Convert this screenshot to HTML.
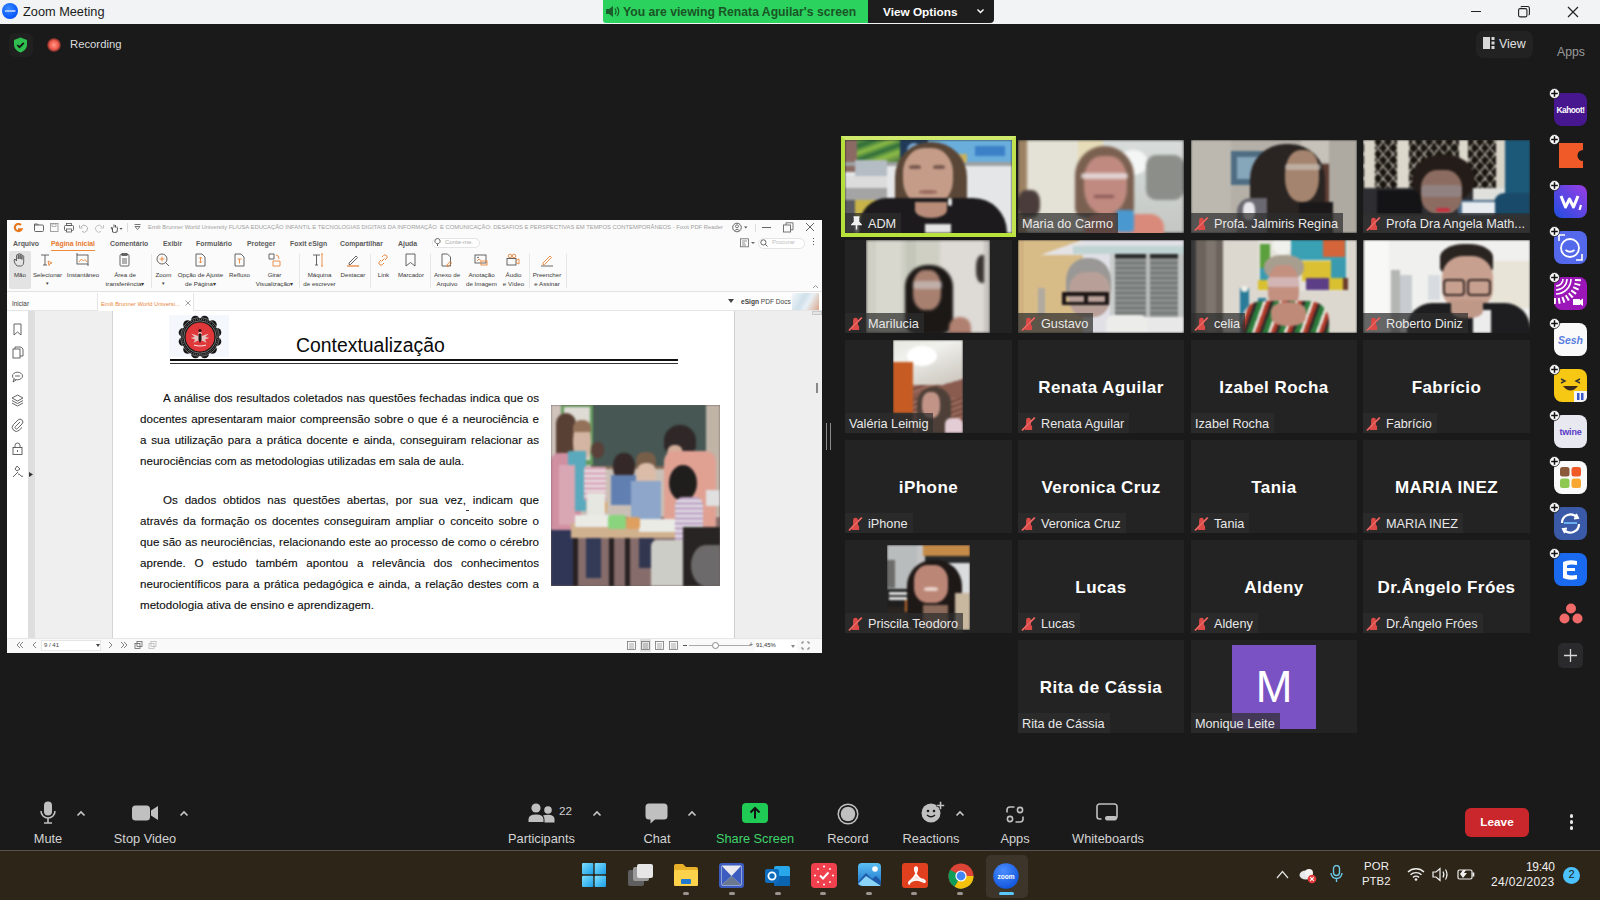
<!DOCTYPE html>
<html><head><meta charset="utf-8">
<style>
*{margin:0;padding:0;box-sizing:border-box}
html,body{width:1600px;height:900px;overflow:hidden;background:#1a1a1a;font-family:"Liberation Sans",sans-serif}
.a{position:absolute}
#title{left:0;top:0;width:1600px;height:24px;background:#f1f3f4}
#main{left:0;top:24px;width:1600px;height:826px;background:#1a1a1a}
#pdf{left:7px;top:220px;width:815px;height:433px;background:#fff;overflow:hidden}
.tile{position:absolute;width:167px;height:93px;background:#232323;overflow:hidden}
.lbl{position:absolute;left:0;bottom:0;height:20px;background:rgba(46,46,46,.72);color:#e8e8e8;font-size:12.7px;line-height:22px;padding:0 5px 0 4px;white-space:nowrap}
.big{position:absolute;left:0;top:38px;width:100%;text-align:center;color:#fff;font-weight:bold;font-size:17px;letter-spacing:0.45px}
#toolbar{left:0;top:780px;width:1600px;height:70px;background:#1a1a1a}
#taskbar{left:0;top:850px;width:1600px;height:50px;background:#2a2117;border-top:1px solid #4a3d2c}
.tb{position:absolute;color:#d0d0d0;font-size:13px;text-align:center}
</style></head><body>

<div id="title" class="a">
 <div class="a" style="left:2px;top:3px;width:16px;height:16px;border-radius:50%;background:radial-gradient(circle at 40% 35%,#3d8bff,#0b5cff 60%,#0a3fd0)"><div class="a" style="left:2px;top:5px;width:12px;font-size:4px;color:#fff;text-align:center;font-weight:bold">zoom</div></div>
 <div class="a" style="left:23px;top:4px;font-size:12.75px;color:#1b1b1b">Zoom Meeting</div>
 <div class="a" style="left:603px;top:0;width:265px;height:23px;background:#2bd35e;border-radius:0 0 0 3px"></div>
 <svg class="a" style="left:605px;top:5px" width="16" height="13" viewBox="0 0 16 13"><path d="M1 4h3l4-3v11l-4-3H1z" fill="#1c5e2b"/><path d="M10 3.5q2 3 0 6M12 2q3.5 4.5 0 9" stroke="#1c5e2b" stroke-width="1.3" fill="none"/></svg>
 <div class="a" style="left:623px;top:5px;font-size:12.2px;font-weight:bold;color:#1a5426">You are viewing Renata Aguilar's screen</div>
 <div class="a" style="left:868px;top:0;width:126px;height:23px;background:#1d1d1d;border-radius:0 0 4px 0"></div>
 <div class="a" style="left:883px;top:5px;font-size:11.8px;font-weight:bold;color:#fff">View Options</div>
 <svg class="a" style="left:976px;top:8px" width="9" height="7" viewBox="0 0 9 7"><path d="M1.5 1.5l3 3 3-3" stroke="#fff" stroke-width="1.4" fill="none"/></svg>
 <div class="a" style="left:1471px;top:11px;width:10px;height:1px;background:#222"></div>
 <svg class="a" style="left:1518px;top:6px" width="12" height="12" viewBox="0 0 12 12"><rect x="0.6" y="2.6" width="8.3" height="8.3" rx="1.5" fill="none" stroke="#222" stroke-width="1.1"/><path d="M3 1.3q0-.8.9-.8h5.6q1.9 0 1.9 1.9v5.6q0 .9-.8.9" fill="none" stroke="#222" stroke-width="1.1"/></svg>
 <svg class="a" style="left:1567px;top:6px" width="12" height="12" viewBox="0 0 12 12"><path d="M1 1l10 10M11 1L1 11" stroke="#222" stroke-width="1.2"/></svg>
</div>
<div id="main" class="a"></div>
<div class="a" style="left:9px;top:33px;width:24px;height:24px;border-radius:6px;background:#202020"></div>
<svg class="a" style="left:13px;top:37px" width="15" height="16" viewBox="0 0 15 16"><path d="M7.5 0.5L14 3v4.5c0 4-3 6.8-6.5 8-3.5-1.2-6.5-4-6.5-8V3z" fill="#2fbf50"/><path d="M4.3 8l2.2 2.2 4.3-4.3" stroke="#111" stroke-width="1.7" fill="none"/></svg>
<div class="a" style="left:47px;top:38px;width:14px;height:14px;border-radius:50%;background:radial-gradient(circle,#ff9a8a 0,#f0584a 45%,rgba(220,60,50,.35) 70%,rgba(0,0,0,0) 100%)"></div>
<div class="a" style="left:70px;top:38px;font-size:11.3px;color:#dcdcdc">Recording</div>
<div class="a" style="left:1476px;top:31px;width:57px;height:27px;border-radius:7px;background:#222"></div>
<svg class="a" style="left:1483px;top:37px" width="12" height="12" viewBox="0 0 12 12"><rect x="0" y="0" width="7" height="12" fill="#d8d8d8"/><rect x="8.5" y="0" width="3" height="3" fill="#d8d8d8"/><rect x="8.5" y="4.5" width="3" height="3" fill="#d8d8d8"/><rect x="8.5" y="9" width="3" height="3" fill="#d8d8d8"/></svg>
<div class="a" style="left:1499px;top:37px;font-size:12.4px;color:#e0e0e0">View</div>
<div class="a" style="left:1557px;top:45px;font-size:12.2px;color:#9a9a9a">Apps</div>

<div class="a" style="left:7px;top:220px;width:815px;height:433px;background:#fff;overflow:hidden"></div>
<div class="a" style="left:7px;top:220px;width:815px;height:16px;background:#fbfbfb"></div>
<div class="a" style="left:7px;top:236px;width:815px;height:56px;background:#fbfbfb;border-bottom:1px solid #e2e2e2"></div>
<svg class="a" style="left:12.5px;top:222.5px" width="10" height="10" viewBox="0 0 10 10"><path d="M8 2A3.6 3.6 0 1 0 8.6 6.2H5" fill="none" stroke="#e8781e" stroke-width="2.1"/></svg>
<svg class="a" style="left:34px;top:223px" width="14" height="10" viewBox="0 0 14 10"><rect x="0.5" y="2" width="9" height="6.5" rx="1" fill="none" stroke="#555" stroke-width="0.9"/><path d="M0.5 3V1h3l1 1" fill="none" stroke="#555" stroke-width="0.9"/></svg>
<svg class="a" style="left:50px;top:223px" width="14" height="10" viewBox="0 0 14 10"><rect x="0.5" y="0.5" width="7.5" height="8" fill="none" stroke="#999" stroke-width="0.9"/><rect x="2" y="1" width="4" height="2.5" fill="none" stroke="#999" stroke-width="0.7"/></svg>
<svg class="a" style="left:64px;top:223px" width="14" height="10" viewBox="0 0 14 10"><rect x="0.5" y="2.5" width="9" height="5" rx="1" fill="none" stroke="#555" stroke-width="0.9"/><rect x="2.5" y="0.5" width="5" height="2" fill="none" stroke="#555" stroke-width="0.8"/><rect x="2.5" y="6" width="5" height="3" fill="#fff" stroke="#555" stroke-width="0.8"/></svg>
<svg class="a" style="left:79px;top:223px" width="14" height="10" viewBox="0 0 14 10"><path d="M2 4a3.5 3.5 0 1 1 1 4.5" fill="none" stroke="#aaa" stroke-width="0.9"/><path d="M0.5 2v3h3" fill="none" stroke="#aaa" stroke-width="0.9"/></svg>
<svg class="a" style="left:94px;top:223px" width="14" height="10" viewBox="0 0 14 10"><path d="M8 4a3.5 3.5 0 1 0-1 4.5" fill="none" stroke="#bbb" stroke-width="0.9"/><path d="M9.5 2v3h-3" fill="none" stroke="#bbb" stroke-width="0.9"/></svg>
<svg class="a" style="left:110px;top:223px" width="14" height="10" viewBox="0 0 14 10"><path d="M2.5 9V4.5M4 4.5V1.5M5.5 4.5V2M7 5V3.5M2.5 7q-2-2-1-3M2.5 9q2 1 4.5 0l.5-4" fill="none" stroke="#444" stroke-width="0.9"/><path d="M9.5 5h3l-1.5 1.8z" fill="#444"/></svg>
<svg class="a" style="left:134px;top:223px" width="14" height="10" viewBox="0 0 14 10"><path d="M0.5 1.5h6M1 3.5l2.5 3 2.5-3z" fill="none" stroke="#666" stroke-width="0.9"/></svg>
<div class="a" style="left:127px;top:223px;width:1px;height:9px;background:#ddd"></div>
<div class="a" style="left:148px;top:223.5px;font-size:5.85px;color:#a0a0a0;white-space:nowrap">Emili Brunner World University FL/USA EDUCAÇÃO INFANTIL E TECNOLOGIAS DIGITAIS DA INFORMAÇÃO&nbsp; E COMUNICAÇÃO: DESAFIOS E PERSPECTIVAS EM TEMPOS CONTEMPORÂNEOS - Foxit PDF Reader</div>
<svg class="a" style="left:732px;top:222px" width="18" height="11" viewBox="0 0 18 11"><circle cx="5" cy="5.5" r="4.3" fill="none" stroke="#555" stroke-width="0.9"/><circle cx="5" cy="4.3" r="1.5" fill="none" stroke="#555" stroke-width="0.8"/><path d="M2.5 8.5q2.5-2.5 5 0" fill="none" stroke="#555" stroke-width="0.8"/><path d="M12 4.5h3.5l-1.75 2z" fill="#555"/></svg>
<div class="a" style="left:755px;top:224px;width:1px;height:8px;background:#ddd"></div>
<div class="a" style="left:762px;top:227px;width:9px;height:1px;background:#666"></div>
<svg class="a" style="left:783px;top:222px" width="11" height="11" viewBox="0 0 11 11"><rect x="0.5" y="3" width="7" height="7" fill="none" stroke="#666" stroke-width="0.9"/><path d="M3 3V0.8h7v7H7.5" fill="none" stroke="#666" stroke-width="0.9"/></svg>
<svg class="a" style="left:805px;top:222px" width="10" height="10" viewBox="0 0 10 10"><path d="M1 1l8 8M9 1L1 9" stroke="#555" stroke-width="0.9"/></svg>
<div class="a" style="left:13px;top:239.5px;font-size:6.9px;font-weight:bold;color:#5a5a5a;white-space:nowrap">Arquivo</div>
<div class="a" style="left:51px;top:239.5px;font-size:6.9px;font-weight:bold;color:#e8792f;white-space:nowrap">Página Inicial</div>
<div class="a" style="left:110px;top:239.5px;font-size:6.9px;font-weight:bold;color:#5a5a5a;white-space:nowrap">Comentário</div>
<div class="a" style="left:163px;top:239.5px;font-size:6.9px;font-weight:bold;color:#5a5a5a;white-space:nowrap">Exibir</div>
<div class="a" style="left:196px;top:239.5px;font-size:6.9px;font-weight:bold;color:#5a5a5a;white-space:nowrap">Formulário</div>
<div class="a" style="left:247px;top:239.5px;font-size:6.9px;font-weight:bold;color:#5a5a5a;white-space:nowrap">Proteger</div>
<div class="a" style="left:290px;top:239.5px;font-size:6.9px;font-weight:bold;color:#5a5a5a;white-space:nowrap">Foxit eSign</div>
<div class="a" style="left:340px;top:239.5px;font-size:6.9px;font-weight:bold;color:#5a5a5a;white-space:nowrap">Compartilhar</div>
<div class="a" style="left:398px;top:239.5px;font-size:6.9px;font-weight:bold;color:#5a5a5a;white-space:nowrap">Ajuda</div>
<div class="a" style="left:51px;top:249.5px;width:44px;height:1.3px;background:#f08a3c"></div>
<div class="a" style="left:432px;top:237.5px;width:48px;height:10px;border:1px solid #e4e4e4;border-radius:5px;background:#fff"></div>
<svg class="a" style="left:434px;top:238px" width="7" height="9" viewBox="0 0 7 9"><path d="M3.5 8V5.8M3.5 5.8a2.6 2.6 0 1 1 .01 0" fill="none" stroke="#555" stroke-width="0.9"/></svg>
<div class="a" style="left:445px;top:238.5px;font-size:6px;color:#aaa">Conte-me.</div>
<svg class="a" style="left:740px;top:238px" width="16" height="10" viewBox="0 0 16 10"><rect x="0.5" y="0.8" width="8" height="8" fill="none" stroke="#666" stroke-width="0.8"/><path d="M2 3h5M2 5h3M2 7h4" stroke="#666" stroke-width="0.7"/><path d="M11 4h4l-2 2z" fill="#666"/></svg>
<div class="a" style="left:758px;top:237.5px;width:47px;height:11px;border:1px solid #e4e4e4;border-radius:6px;background:#fff"></div>
<svg class="a" style="left:760px;top:239px" width="8" height="8" viewBox="0 0 8 8"><circle cx="3.4" cy="3.4" r="2.6" fill="none" stroke="#555" stroke-width="0.9"/><path d="M5.3 5.3L7.5 7.5" stroke="#555" stroke-width="0.9"/></svg>
<div class="a" style="left:772px;top:239px;font-size:6px;color:#bbb">Procurar</div>
<div class="a" style="left:813px;top:238px;width:1.4px;height:1.4px;background:#555;box-shadow:0 3px 0 #555,0 6px 0 #555"></div>
<div class="a" style="left:9px;top:251px;width:22px;height:38px;background:#e3e3e3;border-radius:2px"></div>
<svg class="a" style="left:13px;top:253px" width="14" height="14" viewBox="0 0 14 14"><path d="M4 13q-3-3-3-6l1-1 1.5 2V2.5a.9.9 0 0 1 1.8 0V6V1.5a.9.9 0 0 1 1.8 0V6V2a.9.9 0 0 1 1.8 0V6.5V3.5a.9.9 0 0 1 1.8 0V9q0 3-2 4z" stroke="#555" stroke-width="0.9" fill="none"/></svg>
<svg class="a" style="left:40px;top:253px" width="14" height="14" viewBox="0 0 14 14"><path d="M1 2h8M5 2v10M3 12h4" stroke="#555" stroke-width="0.9" fill="none"/><path d="M8 8l4 2-2 .5-1 2z" stroke="#e8853a" stroke-width="0.9" fill="none"/></svg>
<svg class="a" style="left:76px;top:253px" width="14" height="14" viewBox="0 0 14 14"><rect x="1" y="2" width="11" height="9" stroke="#555" stroke-width="0.9" fill="none"/><path d="M3 9l2.5-3 2 2 1.5-1.5L11 9" stroke="#e8853a" stroke-width="0.9" fill="none"/><path d="M1 0v2M12 11v2" stroke="#555" stroke-width="0.9" fill="none"/></svg>
<svg class="a" style="left:118px;top:253px" width="14" height="14" viewBox="0 0 14 14"><rect x="2" y="1.5" width="9" height="11.5" rx="1" stroke="#555" stroke-width="0.9" fill="none"/><rect x="4" y="0.5" width="5" height="2" stroke="#555" stroke-width="0.9" fill="none"/><path d="M4 6h5M4 8h5M4 10h5" stroke="#555" stroke-width="0.9" fill="none"/></svg>
<svg class="a" style="left:156px;top:253px" width="14" height="14" viewBox="0 0 14 14"><circle cx="6" cy="6" r="5" stroke="#555" stroke-width="0.9" fill="none"/><path d="M9.6 9.6L13 13" stroke="#555" stroke-width="0.9" fill="none"/><path d="M6 3.5v5M3.5 6h5" stroke="#e8853a" stroke-width="0.9" fill="none"/></svg>
<svg class="a" style="left:194px;top:253px" width="14" height="14" viewBox="0 0 14 14"><path d="M2 1h6l3 3v9H2z" stroke="#555" stroke-width="0.9" fill="none"/><path d="M6.5 4v6M5 5.5l1.5-1.5 1.5 1.5M5 8.5l1.5 1.5 1.5-1.5" stroke="#e8853a" stroke-width="0.9" fill="none"/></svg>
<svg class="a" style="left:233px;top:253px" width="14" height="14" viewBox="0 0 14 14"><path d="M2 1h6l3 3v9H2z" stroke="#555" stroke-width="0.9" fill="none"/><path d="M4.5 6h4M6.5 6v4.5" stroke="#e8853a" stroke-width="0.9" fill="none"/></svg>
<svg class="a" style="left:268px;top:253px" width="14" height="14" viewBox="0 0 14 14"><path d="M1 1h5v5H1z" stroke="#555" stroke-width="0.9" fill="none"/><path d="M5 8h7v5H5zM8 2q3 0 3 4" stroke="#e8853a" stroke-width="0.9" fill="none"/></svg>
<svg class="a" style="left:312px;top:253px" width="14" height="14" viewBox="0 0 14 14"><path d="M1 2h7M4.5 2v10M3 12h3" stroke="#555" stroke-width="0.9" fill="none"/><path d="M10 1v12M9 1h2M9 13h2" stroke="#e8853a" stroke-width="0.9" fill="none"/></svg>
<svg class="a" style="left:346px;top:253px" width="14" height="14" viewBox="0 0 14 14"><path d="M3 10l7-7 1.5 1.5-7 7H3z" stroke="#555" stroke-width="0.9" fill="none"/><path d="M1 13h12" stroke="#e8853a" stroke-width="1.3"/></svg>
<svg class="a" style="left:376px;top:253px" width="14" height="14" viewBox="0 0 14 14"><path d="M5.5 8.5l3-3M6 4l1.5-1.5a2 2 0 0 1 3 3L9 7M8 10l-1.5 1.5a2 2 0 0 1-3-3L5 7" stroke="#e8853a" stroke-width="1" fill="none"/></svg>
<svg class="a" style="left:404px;top:253px" width="14" height="14" viewBox="0 0 14 14"><path d="M2 1h9v12l-4.5-3.5L2 13z" stroke="#555" stroke-width="0.9" fill="none"/></svg>
<svg class="a" style="left:440px;top:253px" width="14" height="14" viewBox="0 0 14 14"><path d="M2 1h5.5l3 3v9H2z" stroke="#555" stroke-width="0.9" fill="none"/><path d="M7 12l3-3.5 1.5 1.5-3 3.5H7z" stroke="#e8853a" stroke-width="0.9" fill="none"/></svg>
<svg class="a" style="left:474px;top:253px" width="14" height="14" viewBox="0 0 14 14"><rect x="1" y="2" width="11" height="8" stroke="#555" stroke-width="0.9" fill="none"/><path d="M3 8l2-2 2 1.5" stroke="#e8853a" stroke-width="0.9" fill="none"/><circle cx="4" cy="4.5" r=".8" fill="#555"/><rect x="7" y="8" width="6" height="4" stroke="#e8853a" stroke-width="0.9" fill="none"/></svg>
<svg class="a" style="left:506px;top:253px" width="14" height="14" viewBox="0 0 14 14"><circle cx="4" cy="3" r="1.8" stroke="#e8853a" stroke-width="0.9" fill="none"/><circle cx="8" cy="3" r="1.8" stroke="#e8853a" stroke-width="0.9" fill="none"/><rect x="1" y="5.5" width="9" height="6.5" stroke="#555" stroke-width="0.9" fill="none"/><path d="M10 7.5l3-1.5v5l-3-1.5" stroke="#e8853a" stroke-width="0.9" fill="none"/></svg>
<svg class="a" style="left:540px;top:253px" width="14" height="14" viewBox="0 0 14 14"><path d="M3 10l7-7 1.5 1.5-7 7H3z" stroke="#e8853a" stroke-width="0.9" fill="none"/><path d="M1 13h12" stroke="#555" stroke-width="0.9" fill="none"/></svg>
<div class="a" style="left:151px;top:254px;width:1px;height:34px;background:#e6e6e6"></div>
<div class="a" style="left:299px;top:254px;width:1px;height:34px;background:#e6e6e6"></div>
<div class="a" style="left:370px;top:254px;width:1px;height:34px;background:#e6e6e6"></div>
<div class="a" style="left:430px;top:254px;width:1px;height:34px;background:#e6e6e6"></div>
<div class="a" style="left:529px;top:254px;width:1px;height:34px;background:#e6e6e6"></div>
<div class="a" style="left:566px;top:254px;width:1px;height:34px;background:#e6e6e6"></div>
<div class="a" style="left:-20px;width:80px;text-align:center;top:271.0px;font-size:6.2px;color:#383838;white-space:nowrap">Mão</div>
<div class="a" style="left:7.5px;width:80px;text-align:center;top:271.0px;font-size:6.2px;color:#383838;white-space:nowrap">Selecionar</div>
<div class="a" style="left:7.5px;width:80px;text-align:center;top:280.3px;font-size:5px;color:#383838;white-space:nowrap">▾</div>
<div class="a" style="left:43px;width:80px;text-align:center;top:271.0px;font-size:6.2px;color:#383838;white-space:nowrap">Instantâneo</div>
<div class="a" style="left:85px;width:80px;text-align:center;top:271.0px;font-size:6.2px;color:#383838;white-space:nowrap">Área de</div>
<div class="a" style="left:85px;width:80px;text-align:center;top:280.3px;font-size:6.2px;color:#383838;white-space:nowrap">transferência▾</div>
<div class="a" style="left:123.5px;width:80px;text-align:center;top:271.0px;font-size:6.2px;color:#383838;white-space:nowrap">Zoom</div>
<div class="a" style="left:123.5px;width:80px;text-align:center;top:280.3px;font-size:5px;color:#383838;white-space:nowrap">▾</div>
<div class="a" style="left:160.5px;width:80px;text-align:center;top:271.0px;font-size:6.2px;color:#383838;white-space:nowrap">Opção de Ajuste</div>
<div class="a" style="left:160.5px;width:80px;text-align:center;top:280.3px;font-size:6.2px;color:#383838;white-space:nowrap">de Página▾</div>
<div class="a" style="left:199.5px;width:80px;text-align:center;top:271.0px;font-size:6.2px;color:#383838;white-space:nowrap">Refluxo</div>
<div class="a" style="left:234.5px;width:80px;text-align:center;top:271.0px;font-size:6.2px;color:#383838;white-space:nowrap">Girar</div>
<div class="a" style="left:234.5px;width:80px;text-align:center;top:280.3px;font-size:6.2px;color:#383838;white-space:nowrap">Visualização▾</div>
<div class="a" style="left:279.5px;width:80px;text-align:center;top:271.0px;font-size:6.2px;color:#383838;white-space:nowrap">Máquina</div>
<div class="a" style="left:279.5px;width:80px;text-align:center;top:280.3px;font-size:6.2px;color:#383838;white-space:nowrap">de escrever</div>
<div class="a" style="left:313px;width:80px;text-align:center;top:271.0px;font-size:6.2px;color:#383838;white-space:nowrap">Destacar</div>
<div class="a" style="left:343.5px;width:80px;text-align:center;top:271.0px;font-size:6.2px;color:#383838;white-space:nowrap">Link</div>
<div class="a" style="left:371px;width:80px;text-align:center;top:271.0px;font-size:6.2px;color:#383838;white-space:nowrap">Marcador</div>
<div class="a" style="left:407px;width:80px;text-align:center;top:271.0px;font-size:6.2px;color:#383838;white-space:nowrap">Anexo de</div>
<div class="a" style="left:407px;width:80px;text-align:center;top:280.3px;font-size:6.2px;color:#383838;white-space:nowrap">Arquivo</div>
<div class="a" style="left:441.5px;width:80px;text-align:center;top:271.0px;font-size:6.2px;color:#383838;white-space:nowrap">Anotação</div>
<div class="a" style="left:441.5px;width:80px;text-align:center;top:280.3px;font-size:6.2px;color:#383838;white-space:nowrap">de Imagem</div>
<div class="a" style="left:473.5px;width:80px;text-align:center;top:271.0px;font-size:6.2px;color:#383838;white-space:nowrap">Áudio</div>
<div class="a" style="left:473.5px;width:80px;text-align:center;top:280.3px;font-size:6.2px;color:#383838;white-space:nowrap">e Vídeo</div>
<div class="a" style="left:507px;width:80px;text-align:center;top:271.0px;font-size:6.2px;color:#383838;white-space:nowrap">Preencher</div>
<div class="a" style="left:507px;width:80px;text-align:center;top:280.3px;font-size:6.2px;color:#383838;white-space:nowrap">e Assinar</div>
<svg class="a" style="left:812px;top:284px" width="7" height="5" viewBox="0 0 7 5"><path d="M1 4l2.5-2.5L6 4" stroke="#888" stroke-width="0.8" fill="none"/></svg>
<div class="a" style="left:7px;top:292px;width:815px;height:19px;background:#fdfdfd;border-bottom:1px solid #e5e5e5"></div>
<div class="a" style="left:12px;top:300px;font-size:6.4px;color:#3a3a3a">Iniciar</div>
<div class="a" style="left:97px;top:293px;width:97px;height:18px;background:#fff;border-left:1px solid #e5e5e5;border-right:1px solid #e5e5e5"></div>
<div class="a" style="left:101px;top:300.5px;font-size:5.8px;color:#e8853a;white-space:nowrap">Emili Brunner World Universi...</div>
<svg class="a" style="left:185px;top:300px" width="6" height="6" viewBox="0 0 6 6"><path d="M.5 .5l5 5M5.5 .5l-5 5" stroke="#777" stroke-width="0.7"/></svg>
<svg class="a" style="left:728px;top:299px" width="6" height="4" viewBox="0 0 6 4"><path d="M0 0h6L3 4z" fill="#444"/></svg>
<div class="a" style="left:741px;top:298px;font-size:6.6px;color:#444;white-space:nowrap"><b>eSign</b> PDF Docs</div>
<div class="a" style="left:792px;top:293px;width:27px;height:17px;background:linear-gradient(120deg,#f4f8fb 0,#cfe0ea 40%,#e8f0f5 60%,#d9a58a 100%)"></div>
<div class="a" style="left:28px;top:311px;width:7px;height:327px;background:#dedede"></div>
<div class="a" style="left:35px;top:311px;width:78px;height:327px;background:#efefef;border-right:1px solid #d4d4d4"></div>
<div class="a" style="left:734px;top:311px;width:88px;height:327px;background:#eeeeee;border-left:1px solid #cfcfcf"></div>
<div class="a" style="left:812px;top:310.5px;width:10px;height:4.5px;background:#e4e4e4;border:1px solid #c8c8c8"></div>
<div class="a" style="left:816px;top:383px;width:2px;height:10px;background:#888"></div>
<svg class="a" style="left:11px;top:323px" width="14" height="14" viewBox="0 0 14 14"><path d="M3 1h7v11l-3.5-3L3 12z" stroke="#555" stroke-width="0.9" fill="none"/></svg>
<svg class="a" style="left:11px;top:346px" width="14" height="14" viewBox="0 0 14 14"><rect x="2" y="3" width="7" height="9" stroke="#555" stroke-width="0.9" fill="none"/><path d="M4 3V1h6l2 2v7h-3" stroke="#555" stroke-width="0.9" fill="none"/></svg>
<svg class="a" style="left:11px;top:370px" width="14" height="14" viewBox="0 0 14 14"><ellipse cx="6.5" cy="6" rx="5" ry="3.8" stroke="#555" stroke-width="0.9" fill="none"/><path d="M3 9l-1 3 3-2" stroke="#555" stroke-width="0.9" fill="none"/><path d="M4 6h5" stroke="#555" stroke-width="0.9" fill="none"/></svg>
<svg class="a" style="left:11px;top:394px" width="14" height="14" viewBox="0 0 14 14"><path d="M6.5 1L12 4l-5.5 3L1 4z" stroke="#555" stroke-width="0.9" fill="none"/><path d="M1 6.5l5.5 3 5.5-3M1 9l5.5 3 5.5-3" stroke="#555" stroke-width="0.9" fill="none"/></svg>
<svg class="a" style="left:11px;top:418px" width="14" height="14" viewBox="0 0 14 14"><path d="M9 4L4.5 8.5a1.4 1.4 0 0 0 2 2L11 6a2.8 2.8 0 0 0-4-4L2.5 6.5a4 4 0 0 0 5.7 5.7L11 9.5" stroke="#555" stroke-width="0.9" fill="none"/></svg>
<svg class="a" style="left:11px;top:442px" width="14" height="14" viewBox="0 0 14 14"><rect x="2" y="5.5" width="9" height="7" stroke="#555" stroke-width="0.9" fill="none"/><path d="M4 5.5V3.5a2.5 2.5 0 0 1 5 0v2" stroke="#555" stroke-width="0.9" fill="none"/><path d="M6.5 8v2" stroke="#555" stroke-width="0.9" fill="none"/></svg>
<svg class="a" style="left:11px;top:465px" width="14" height="14" viewBox="0 0 14 14"><path d="M2 12l5-5M4 4l2-3 3 3-3 2zM7 9q2 0 3 2 1 1 2 0" stroke="#555" stroke-width="0.9" fill="none"/></svg>
<svg class="a" style="left:29px;top:472px" width="4" height="5" viewBox="0 0 4 5"><path d="M0 0l4 2.5L0 5z" fill="#333"/></svg>
<div class="a" style="left:169px;top:315px;width:60px;height:42px;background:#f4f7fb"></div>
<svg class="a" style="left:176.5px;top:314px" width="46" height="46" viewBox="0 0 46 46">
<g fill="#151515"><circle cx="39.91" cy="27.50" r="4.4"/><circle cx="35.40" cy="35.35" r="4.4"/><circle cx="27.56" cy="39.90" r="4.4"/><circle cx="18.50" cy="39.91" r="4.4"/><circle cx="10.65" cy="35.40" r="4.4"/><circle cx="6.10" cy="27.56" r="4.4"/><circle cx="6.09" cy="18.50" r="4.4"/><circle cx="10.60" cy="10.65" r="4.4"/><circle cx="18.44" cy="6.10" r="4.4"/><circle cx="27.50" cy="6.09" r="4.4"/><circle cx="35.35" cy="10.60" r="4.4"/><circle cx="39.90" cy="18.44" r="4.4"/></g><circle cx="23" cy="23" r="19" fill="#151515"/>
<circle cx="23" cy="23" r="19.3" fill="none" stroke="#d8d8d8" stroke-width="0.45"/>
<circle cx="23" cy="23" r="16.2" fill="none" stroke="#cfcfcf" stroke-width="0.5"/>
<circle cx="23" cy="23" r="17.7" fill="none" stroke="#aaa" stroke-width="0.9" stroke-dasharray="0.8 1.2"/>
<circle cx="23" cy="23" r="14.4" fill="#e0383a"/>
<path d="M23 17l-1.8 2v3l-7-2.5 3.5 3.5-4 .8 4.5 2-2 3 6.8-3 6.8 3-2-3 4.5-2-4-.8 3.5-3.5-7 2.5v-3z" fill="#e8d0d0" opacity="0.9"/>
<path d="M23 19l-1.5 1.5v5l1.5 3.5 1.5-3.5v-5z" fill="#201818"/>
<circle cx="23" cy="16.5" r="1.6" fill="#301010"/>
<path d="M17 31q6 2 12 0" stroke="#f4e4e4" stroke-width="1.1" fill="none"/>
</svg>
<div class="a" style="left:296px;top:333.5px;font-size:19.4px;color:#0a0a0a;white-space:nowrap">Contextualização</div>
<div class="a" style="left:170px;top:359px;width:508px;height:2.3px;background:#111"></div>
<div class="a" style="left:170px;top:363.3px;width:508px;height:1px;background:#333"></div>
<div class="a" style="left:163px;top:390.6px;font-size:11.6px;color:#0e0e0e;white-space:nowrap;line-height:14px;-webkit-text-stroke:0.12px #0e0e0e;width:376px;text-align:justify;text-align-last:justify;white-space:normal;height:14px;overflow:hidden">A análise dos resultados coletados nas questões fechadas indica que os</div>
<div class="a" style="left:140px;top:411.6px;font-size:11.6px;color:#0e0e0e;white-space:nowrap;line-height:14px;-webkit-text-stroke:0.12px #0e0e0e;width:399px;text-align:justify;text-align-last:justify;white-space:normal;height:14px;overflow:hidden">docentes apresentaram maior compreensão sobre o que é a neurociência e</div>
<div class="a" style="left:140px;top:432.6px;font-size:11.6px;color:#0e0e0e;white-space:nowrap;line-height:14px;-webkit-text-stroke:0.12px #0e0e0e;width:399px;text-align:justify;text-align-last:justify;white-space:normal;height:14px;overflow:hidden">a sua utilização para a prática docente e ainda, conseguiram relacionar as</div>
<div class="a" style="left:140px;top:453.6px;font-size:11.6px;color:#0e0e0e;white-space:nowrap;line-height:14px;-webkit-text-stroke:0.12px #0e0e0e">neurociências com as metodologias utilizadas em sala de aula.</div>
<div class="a" style="left:163px;top:492.6px;font-size:11.6px;color:#0e0e0e;white-space:nowrap;line-height:14px;-webkit-text-stroke:0.12px #0e0e0e;width:376px;text-align:justify;text-align-last:justify;white-space:normal;height:14px;overflow:hidden">Os dados obtidos nas questões abertas, por sua vez, indicam que</div>
<div class="a" style="left:140px;top:513.6px;font-size:11.6px;color:#0e0e0e;white-space:nowrap;line-height:14px;-webkit-text-stroke:0.12px #0e0e0e;width:399px;text-align:justify;text-align-last:justify;white-space:normal;height:14px;overflow:hidden">através da formação os docentes conseguiram ampliar o conceito sobre o</div>
<div class="a" style="left:140px;top:534.6px;font-size:11.6px;color:#0e0e0e;white-space:nowrap;line-height:14px;-webkit-text-stroke:0.12px #0e0e0e;width:399px;text-align:justify;text-align-last:justify;white-space:normal;height:14px;overflow:hidden">que são as neurociências, relacionando este ao processo de como o cérebro</div>
<div class="a" style="left:140px;top:555.6px;font-size:11.6px;color:#0e0e0e;white-space:nowrap;line-height:14px;-webkit-text-stroke:0.12px #0e0e0e;width:399px;text-align:justify;text-align-last:justify;white-space:normal;height:14px;overflow:hidden">aprende. O estudo também apontou a relevância dos conhecimentos</div>
<div class="a" style="left:140px;top:576.6px;font-size:11.6px;color:#0e0e0e;white-space:nowrap;line-height:14px;-webkit-text-stroke:0.12px #0e0e0e;width:399px;text-align:justify;text-align-last:justify;white-space:normal;height:14px;overflow:hidden">neurocientíficos para a prática pedagógica e ainda, a relação destes com a</div>
<div class="a" style="left:140px;top:597.6px;font-size:11.6px;color:#0e0e0e;white-space:nowrap;line-height:14px;-webkit-text-stroke:0.12px #0e0e0e">metodologia ativa de ensino e aprendizagem.</div>
<div class="a" style="left:465.5px;top:509.5px;width:3px;height:1px;background:#333"></div>
<div class="a" style="left:551px;top:405px;width:169px;height:181px;overflow:hidden;background:#6a5a58"><div class="a" style="left:0;top:0;width:169px;height:181px;filter:blur(1.2px) saturate(0.85) contrast(0.92)"><div class="a" style="left:0px;top:0px;width:169px;height:181px;background:#8a7070;"></div><div class="a" style="left:0px;top:0px;width:169px;height:112px;background:#d2c4b8;"></div><div class="a" style="left:40px;top:0px;width:115px;height:63px;background:#3e5450;"></div><div class="a" style="left:40px;top:61px;width:115px;height:3px;background:#8a6a50;"></div><div class="a" style="left:10px;top:0px;width:32px;height:60px;background:#5aa050;"></div><div class="a" style="left:13px;top:2px;width:26px;height:53px;background:#e8e4dc;"></div><div class="a" style="left:0px;top:0px;width:10px;height:110px;background:#d8c8c0;"></div><div class="a" style="left:155px;top:0px;width:14px;height:110px;background:#c8b8a8;"></div><div class="a" style="left:0px;top:112px;width:169px;height:69px;background:#8a6a68;"></div><div class="a" style="left:5px;top:8px;width:20px;height:45px;background:#5a3a2a;border-radius:10px 10px 2px 2px"></div><div class="a" style="left:0px;top:48px;width:30px;height:78px;background:#e28ea6;border-radius:8px 8px 0 0"></div><div class="a" style="left:0px;top:125px;width:26px;height:56px;background:#283058;"></div><div class="a" style="left:22px;top:18px;width:18px;height:38px;background:#e0b8a0;border-radius:45%"></div><div class="a" style="left:22px;top:15px;width:18px;height:12px;background:#9a7050;border-radius:8px 8px 0 0"></div><div class="a" style="left:17px;top:46px;width:18px;height:60px;background:#4ab0c8;"></div><div class="a" style="left:8px;top:60px;width:16px;height:60px;background:#e8a8b8;"></div><div class="a" style="left:40px;top:37px;width:13px;height:16px;background:#5a3a30;border-radius:45%"></div><div class="a" style="left:33px;top:62px;width:22px;height:33px;background:repeating-linear-gradient(180deg,#e8a8c0 0,#e8a8c0 3px,#f4f0f0 3px,#f4f0f0 5px);"></div><div class="a" style="left:62px;top:48px;width:22px;height:28px;background:#302020;border-radius:45%"></div><div class="a" style="left:60px;top:70px;width:25px;height:30px;background:#5a80c0;"></div><div class="a" style="left:85px;top:47px;width:20px;height:16px;background:#7a5a40;border-radius:8px 8px 2px 2px"></div><div class="a" style="left:86px;top:58px;width:19px;height:22px;background:#e8c0a8;border-radius:40%"></div><div class="a" style="left:80px;top:76px;width:30px;height:40px;background:#8aaad8;"></div><div class="a" style="left:113px;top:20px;width:32px;height:30px;background:#2a2020;border-radius:50% 50% 30% 30%"></div><div class="a" style="left:116px;top:40px;width:16px;height:22px;background:#e0b098;border-radius:40%"></div><div class="a" style="left:113px;top:46px;width:52px;height:80px;background:#f2a290;border-radius:10px 10px 0 0"></div><div class="a" style="left:155px;top:85px;width:14px;height:16px;background:#e8e8e8;"></div><div class="a" style="left:36px;top:96px;width:20px;height:12px;background:#f0a858;border-radius:3px"></div><div class="a" style="left:36px;top:88px;width:18px;height:22px;background:#f0f0ea;"></div><div class="a" style="left:20px;top:118px;width:112px;height:15px;background:#dcb488;"></div><div class="a" style="left:24px;top:110px;width:36px;height:12px;background:#f4f4ee;"></div><div class="a" style="left:88px;top:114px;width:38px;height:13px;background:#f4f4ee;"></div><div class="a" style="left:57px;top:110px;width:18px;height:14px;background:#80e070;border-radius:3px"></div><div class="a" style="left:75px;top:112px;width:14px;height:12px;background:#f0a050;border-radius:3px"></div><div class="a" style="left:22px;top:133px;width:5px;height:48px;background:#201818;"></div><div class="a" style="left:58px;top:133px;width:5px;height:48px;background:#201818;"></div><div class="a" style="left:74px;top:133px;width:5px;height:48px;background:#201818;"></div><div class="a" style="left:126px;top:133px;width:5px;height:48px;background:#201818;"></div><div class="a" style="left:35px;top:133px;width:15px;height:40px;background:#2a3458;"></div><div class="a" style="left:88px;top:133px;width:15px;height:30px;background:#2a3050;"></div><div class="a" style="left:118px;top:60px;width:28px;height:36px;background:#181414;border-radius:50%"></div><div class="a" style="left:124px;top:92px;width:28px;height:52px;background:repeating-linear-gradient(180deg,#c8a8d0 0,#c8a8d0 3px,#f0eef4 3px,#f0eef4 5px);border-radius:8px 8px 0 0"></div><div class="a" style="left:100px;top:135px;width:38px;height:46px;background:#d4d4cc;border-radius:6px 0 0 0"></div><div class="a" style="left:132px;top:122px;width:37px;height:59px;background:#221c1c;"></div><div class="a" style="left:140px;top:140px;width:29px;height:41px;background:rgba(180,180,180,.5);border-radius:50% 0 0 50%"></div></div></div>
<div class="a" style="left:7px;top:638px;width:815px;height:15px;background:#f9f9f9;border-top:1px solid #e6e6e6"></div>
<svg class="a" style="left:16px;top:641px" width="9" height="9" viewBox="0 0 9 9"><path d="M4 1L1 4l3 3M7 1L4 4l3 3" stroke="#666" stroke-width="0.8" fill="none"/></svg>
<svg class="a" style="left:31px;top:641px" width="9" height="9" viewBox="0 0 9 9"><path d="M5 1L2 4l3 3" stroke="#666" stroke-width="0.8" fill="none"/></svg>
<svg class="a" style="left:107px;top:641px" width="9" height="9" viewBox="0 0 9 9"><path d="M2 1l3 3-3 3" stroke="#666" stroke-width="0.8" fill="none"/></svg>
<svg class="a" style="left:120px;top:641px" width="9" height="9" viewBox="0 0 9 9"><path d="M1 1l3 3-3 3M4 1l3 3-3 3" stroke="#666" stroke-width="0.8" fill="none"/></svg>
<svg class="a" style="left:134px;top:641px" width="9" height="9" viewBox="0 0 9 9"><rect x="1" y="2.5" width="5" height="5" stroke="#666" stroke-width="0.8" fill="none"/><rect x="3" y=".5" width="5" height="5" stroke="#666" stroke-width="0.8" fill="none"/></svg>
<svg class="a" style="left:148px;top:641px" width="9" height="9" viewBox="0 0 9 9"><rect x="1" y="2.5" width="5" height="5" stroke="#bbb" stroke-width="0.8" fill="none"/><rect x="3" y=".5" width="5" height="5" stroke="#bbb" stroke-width="0.8" fill="none"/></svg>
<div class="a" style="left:41px;top:640px;width:60px;height:11px;border:1px solid #e6e6e6;background:#fff"></div>
<div class="a" style="left:44px;top:642px;font-size:6px;color:#444">9 / 41</div>
<svg class="a" style="left:96px;top:644px" width="4" height="3" viewBox="0 0 4 3"><path d="M0 0h4L2 3z" fill="#444"/></svg>
<svg class="a" style="left:627px;top:641px" width="9" height="9" viewBox="0 0 9 9"><rect x=".5" y=".5" width="8" height="8" stroke="#777" stroke-width="0.8" fill="none"/><path d="M2 3h5M2 5h5M2 7h5" stroke="#777" stroke-width="0.6"/></svg>
<div class="a" style="left:640px;top:639px;width:11px;height:13px;background:#e2e2e2"></div>
<svg class="a" style="left:641px;top:641px" width="9" height="9" viewBox="0 0 9 9"><rect x=".5" y=".5" width="8" height="8" stroke="#777" stroke-width="0.8" fill="none"/><path d="M2 3h5M2 5h5M2 7h5" stroke="#777" stroke-width="0.6"/></svg>
<svg class="a" style="left:655px;top:641px" width="9" height="9" viewBox="0 0 9 9"><rect x=".5" y=".5" width="8" height="8" stroke="#777" stroke-width="0.8" fill="none"/><path d="M2 3h5M2 5h5M2 7h5" stroke="#777" stroke-width="0.6"/></svg>
<svg class="a" style="left:669px;top:641px" width="9" height="9" viewBox="0 0 9 9"><rect x=".5" y=".5" width="8" height="8" stroke="#777" stroke-width="0.8" fill="none"/><path d="M2 3h5M2 5h5M2 7h5" stroke="#777" stroke-width="0.6"/></svg>
<div class="a" style="left:683px;top:645px;width:4px;height:1px;background:#555"></div>
<div class="a" style="left:689px;top:645px;width:62px;height:1px;background:#aaa"></div>
<div class="a" style="left:712px;top:642px;width:7px;height:7px;border-radius:50%;border:1px solid #888;background:#fff"></div>
<div class="a" style="left:749px;top:641px;font-size:7px;color:#555">+</div>
<div class="a" style="left:755px;top:640px;width:42px;height:11px;background:#fff"></div>
<div class="a" style="left:756px;top:642px;font-size:5.8px;color:#333">91,45%</div>
<svg class="a" style="left:791px;top:645px" width="4" height="3" viewBox="0 0 4 3"><path d="M0 0h4L2 3z" fill="#888"/></svg>
<svg class="a" style="left:801px;top:641px" width="9" height="9" viewBox="0 0 9 9"><path d="M1 3V1h2M6 1h2v2M8 6v2H6M3 8H1V6" stroke="#666" stroke-width="0.8" fill="none"/></svg>
<div class="a" style="left:841px;top:136px;width:175px;height:101px;border:4px solid #c4e85a;border-color:#cfe96b #c0e24e #b9e23c #b8e03a"></div>
<div class="tile" style="left:845px;top:140px;width:167px"><div class="a" style="left:0px;top:0px;width:167px;height:93px;overflow:hidden"><div class="a" style="left:0;top:0;width:167px;height:93px;filter:blur(1.3px)"><div class="a" style="left:0px;top:0px;width:167px;height:93px;background:#e4e6e8;"></div><div class="a" style="left:0px;top:0px;width:167px;height:23px;background:#6aaedc;"></div><div class="a" style="left:0px;top:0px;width:60px;height:23px;background:linear-gradient(160deg,#8fbe46 0,#2c6a3a 25%,#8fbe46 40%,#2c6a3a 55%,#8fbe46 70%,#335a40 100%);"></div><div class="a" style="left:55px;top:0px;width:28px;height:23px;background:#203a58;"></div><div class="a" style="left:62px;top:3px;width:14px;height:14px;background:#7aa8d0;border-radius:50%"></div><div class="a" style="left:92px;top:14px;width:30px;height:9px;background:#c8b060;"></div><div class="a" style="left:130px;top:6px;width:30px;height:10px;background:#3c80c8;"></div><div class="a" style="left:0px;top:0px;width:12px;height:32px;background:#8a6a62;"></div><div class="a" style="left:0px;top:22px;width:167px;height:4px;background:#9ea2a2;"></div><div class="a" style="left:10px;top:20px;width:32px;height:16px;background:#b4bcc4;"></div><div class="a" style="left:0px;top:36px;width:42px;height:12px;background:#dcdcdc;"></div><div class="a" style="left:0px;top:48px;width:42px;height:14px;background:#a4a4a4;"></div><div class="a" style="left:8px;top:60px;width:34px;height:18px;background:#c8b448;"></div><div class="a" style="left:0px;top:60px;width:10px;height:33px;background:#5a5a62;"></div><div class="a" style="left:50px;top:2px;width:72px;height:75px;background:#5a4636;border-radius:35px 35px 12px 12px"></div><div class="a" style="left:58px;top:8px;width:50px;height:58px;background:#c49c88;border-radius:42% 42% 45% 45%"></div><div class="a" style="left:64px;top:25px;width:12px;height:4px;background:#7a5a50;border-radius:40%"></div><div class="a" style="left:88px;top:25px;width:12px;height:4px;background:#7a5a50;border-radius:40%"></div><div class="a" style="left:74px;top:50px;width:18px;height:4px;background:#9a6a60;border-radius:40%"></div><div class="a" style="left:14px;top:58px;width:148px;height:40px;background:#1c1a1c;border-radius:28px 34px 0 0"></div><div class="a" style="left:70px;top:62px;width:32px;height:16px;background:#b88c78;border-radius:0 0 50% 50%"></div><div class="a" style="left:80px;top:84px;width:26px;height:9px;background:#e4e4e4;"></div><div class="a" style="left:103px;top:58px;width:4px;height:8px;background:#e8e8e8;border-radius:40%"></div></div></div><div class="lbl" style="padding-left:23px"><svg class="a" style="left:6px;top:3px" width="11" height="14" viewBox="0 0 11 14"><path d="M2.5 1h6M3.5 1v5L1 8.5h9L7.5 6V1M5.5 8.5V13.5" stroke="#f0f0f0" stroke-width="1.5" fill="#f0f0f0"/></svg>ADM</div></div>
<div class="tile" style="left:1018px;top:140px;width:166px"><div class="a" style="left:0px;top:0px;width:166px;height:93px;overflow:hidden"><div class="a" style="left:0;top:0;width:166px;height:93px;filter:blur(1.5px)"><div class="a" style="left:0px;top:0px;width:166px;height:93px;background:#dcdeda;"></div><div class="a" style="left:0px;top:0px;width:9px;height:93px;background:#9c8262;"></div><div class="a" style="left:9px;top:0px;width:56px;height:93px;background:#e4e2d6;"></div><div class="a" style="left:60px;top:0px;width:25px;height:30px;background:#e6dcb8;"></div><div class="a" style="left:85px;top:0px;width:81px;height:93px;background:linear-gradient(180deg,#d8dcda 0,#ced4d2 45%,#c4c6c2 100%);"></div><div class="a" style="left:100px;top:10px;width:30px;height:25px;background:#f4f6f6;border-radius:50%"></div><div class="a" style="left:128px;top:15px;width:38px;height:45px;background:#8c8e8a;border-radius:10px"></div><div class="a" style="left:0px;top:50px;width:22px;height:28px;background:#4a3c3a;border-radius:40%"></div><div class="a" style="left:57px;top:6px;width:59px;height:72px;background:#7a6050;border-radius:30px 30px 10px 10px"></div><div class="a" style="left:66px;top:16px;width:43px;height:58px;background:#c08a80;border-radius:40% 40% 45% 45%"></div><div class="a" style="left:63px;top:33px;width:47px;height:6px;background:rgba(236,234,236,.75);border-radius:4px"></div><div class="a" style="left:76px;top:55px;width:20px;height:3px;background:#8a5a56;"></div><div class="a" style="left:66px;top:74px;width:80px;height:25px;background:#da8a7a;border-radius:14px 14px 0 0"></div><div class="a" style="left:98px;top:70px;width:18px;height:22px;background:#4a98d0;border-radius:4px"></div></div></div><div class="lbl" style="padding-left:4px">Maria do Carmo</div></div>
<div class="tile" style="left:1191px;top:140px;width:166px"><div class="a" style="left:0px;top:0px;width:166px;height:93px;overflow:hidden"><div class="a" style="left:0;top:0;width:166px;height:93px;filter:blur(1.3px)"><div class="a" style="left:0px;top:0px;width:166px;height:93px;background:#b4b0a8;"></div><div class="a" style="left:0px;top:0px;width:40px;height:93px;background:#bcb8b0;"></div><div class="a" style="left:110px;top:0px;width:30px;height:22px;background:#c6c2ba;"></div><div class="a" style="left:40px;top:11px;width:33px;height:34px;background:#4e6c82;"></div><div class="a" style="left:46px;top:17px;width:22px;height:22px;background:#86a6ba;"></div><div class="a" style="left:127px;top:24px;width:11px;height:48px;background:#5c3c32;"></div><div class="a" style="left:138px;top:0px;width:28px;height:93px;background:#aeaaa2;"></div><div class="a" style="left:59px;top:4px;width:75px;height:89px;background:#2a2422;border-radius:35px 35px 5px 5px"></div><div class="a" style="left:94px;top:10px;width:34px;height:52px;background:#a4846e;border-radius:45% 40% 45% 45%"></div><div class="a" style="left:94px;top:24px;width:36px;height:6px;background:rgba(210,208,204,.55);border-radius:3px"></div><div class="a" style="left:46px;top:58px;width:30px;height:35px;background:#6a6870;border-radius:14px 0 0 0"></div><div class="a" style="left:52px;top:62px;width:12px;height:18px;background:#e8e8ec;border-radius:40%"></div><div class="a" style="left:108px;top:62px;width:34px;height:31px;background:#1a1818;"></div></div></div><div class="lbl" style="padding-left:23px"><svg class="a" style="left:3px;top:4px" width="15" height="14" viewBox="0 0 15 14"><path d="M7.5 0.8a2.4 2.4 0 0 1 2.4 2.4V7q0 1.4 1.2 2.3V13H3.9V9.3Q5.1 8.4 5.1 7V3.2A2.4 2.4 0 0 1 7.5 0.8z" fill="#dc4a48"/><path d="M1 13.5L13.8 0.5" stroke="#dc4a48" stroke-width="1.8"/><path d="M1.2 13.3L13.6 0.7" stroke="#f4b0a8" stroke-width="0.6"/></svg>Profa. Jalmiris Regina</div></div>
<div class="tile" style="left:1363px;top:140px;width:167px"><div class="a" style="left:0px;top:0px;width:167px;height:93px;overflow:hidden"><div class="a" style="left:0;top:0;width:167px;height:93px;filter:blur(1.0px)"><div class="a" style="left:0px;top:0px;width:167px;height:93px;background:#3a3838;"></div><div class="a" style="left:0px;top:0px;width:142px;height:50px;background:repeating-linear-gradient(50deg,#18140f 0,#18140f 6.8px,#c8c4b8 6.8px,#c8c4b8 7.8px),#18140f;"></div><div class="a" style="left:0px;top:0px;width:142px;height:50px;background:repeating-linear-gradient(-50deg,rgba(0,0,0,0) 0,rgba(0,0,0,0) 6.8px,#c8c4b8 6.8px,#c8c4b8 7.8px);"></div><div class="a" style="left:1px;top:0px;width:11px;height:75px;background:#d8d4c8;"></div><div class="a" style="left:34px;top:0px;width:12px;height:50px;background:#dcd8cc;"></div><div class="a" style="left:96px;top:0px;width:9px;height:50px;background:#dcd8cc;"></div><div class="a" style="left:133px;top:0px;width:9px;height:55px;background:#d8d4c8;"></div><div class="a" style="left:142px;top:0px;width:25px;height:60px;background:#1c5878;"></div><div class="a" style="left:105px;top:48px;width:37px;height:12px;background:#e0e0dc;"></div><div class="a" style="left:0px;top:48px;width:110px;height:45px;background:#2e2e32;"></div><div class="a" style="left:14px;top:50px;width:45px;height:25px;background:#141416;"></div><div class="a" style="left:95px;top:60px;width:72px;height:33px;background:#4a6a88;"></div><div class="a" style="left:131px;top:53px;width:36px;height:22px;background:#1a4a6a;border-radius:10px 0 0 0"></div><div class="a" style="left:99px;top:62px;width:33px;height:12px;background:#e8ecf0;"></div><div class="a" style="left:49px;top:14px;width:63px;height:50px;background:#241c18;border-radius:50%"></div><div class="a" style="left:58px;top:30px;width:41px;height:44px;background:#8c6c60;border-radius:40%"></div><div class="a" style="left:58px;top:45px;width:41px;height:12px;background:rgba(150,156,170,.45);border-radius:4px"></div><div class="a" style="left:73px;top:68px;width:14px;height:4px;background:#c83040;border-radius:2px"></div><div class="a" style="left:0px;top:75px;width:167px;height:18px;background:#3c3c3e;"></div></div></div><div class="lbl" style="padding-left:23px"><svg class="a" style="left:3px;top:4px" width="15" height="14" viewBox="0 0 15 14"><path d="M7.5 0.8a2.4 2.4 0 0 1 2.4 2.4V7q0 1.4 1.2 2.3V13H3.9V9.3Q5.1 8.4 5.1 7V3.2A2.4 2.4 0 0 1 7.5 0.8z" fill="#dc4a48"/><path d="M1 13.5L13.8 0.5" stroke="#dc4a48" stroke-width="1.8"/><path d="M1.2 13.3L13.6 0.7" stroke="#f4b0a8" stroke-width="0.6"/></svg>Profa Dra Angela Math...</div></div>
<div class="tile" style="left:845px;top:240px;width:167px"><div class="a" style="left:21px;top:0px;width:124px;height:93px;overflow:hidden"><div class="a" style="left:0;top:0;width:124px;height:93px;filter:blur(1.5px)"><div class="a" style="left:0px;top:0px;width:124px;height:93px;background:#cfcfc4;"></div><div class="a" style="left:10px;top:0px;width:25px;height:93px;background:#d8d8ce;"></div><div class="a" style="left:40px;top:0px;width:10px;height:93px;background:#c4c6ba;"></div><div class="a" style="left:74px;top:0px;width:50px;height:93px;background:#dedad6;"></div><div class="a" style="left:110px;top:15px;width:14px;height:28px;background:#3a3432;border-radius:40%"></div><div class="a" style="left:118px;top:0px;width:6px;height:93px;background:#c8c4c0;"></div><div class="a" style="left:39px;top:25px;width:48px;height:68px;background:#1c1816;border-radius:22px 22px 10px 10px"></div><div class="a" style="left:47px;top:30px;width:28px;height:40px;background:#a88070;border-radius:40%"></div><div class="a" style="left:47px;top:41px;width:29px;height:8px;background:rgba(214,214,218,.55);border-radius:3px"></div><div class="a" style="left:83px;top:77px;width:22px;height:16px;background:#b08070;border-radius:10px 10px 0 0"></div></div></div><div class="lbl" style="padding-left:23px"><svg class="a" style="left:3px;top:4px" width="15" height="14" viewBox="0 0 15 14"><path d="M7.5 0.8a2.4 2.4 0 0 1 2.4 2.4V7q0 1.4 1.2 2.3V13H3.9V9.3Q5.1 8.4 5.1 7V3.2A2.4 2.4 0 0 1 7.5 0.8z" fill="#dc4a48"/><path d="M1 13.5L13.8 0.5" stroke="#dc4a48" stroke-width="1.8"/><path d="M1.2 13.3L13.6 0.7" stroke="#f4b0a8" stroke-width="0.6"/></svg>Marilucia</div></div>
<div class="tile" style="left:1018px;top:240px;width:166px"><div class="a" style="left:0px;top:0px;width:166px;height:93px;overflow:hidden"><div class="a" style="left:0;top:0;width:166px;height:93px;filter:blur(1.3px)"><div class="a" style="left:0px;top:0px;width:166px;height:93px;background:#e0e0e6;"></div><div class="a" style="left:0px;top:0px;width:65px;height:93px;background:#d8bc88;"></div><div class="a" style="left:0px;top:0px;width:65px;height:15px;background:linear-gradient(160deg,#d8bc88 60%,#e4e2e4 60%);"></div><div class="a" style="left:3px;top:0px;width:2px;height:93px;background:#c8a878;"></div><div class="a" style="left:20px;top:48px;width:7px;height:27px;background:#b0aaa0;"></div><div class="a" style="left:55px;top:6px;width:111px;height:8px;background:#c0d4d4;"></div><div class="a" style="left:94px;top:14px;width:72px;height:63px;background:repeating-linear-gradient(180deg,#8e9290 0,#8e9290 3px,#6e7270 3px,#6e7270 5px);"></div><div class="a" style="left:94px;top:14px;width:72px;height:4px;background:#2a2a2a;"></div><div class="a" style="left:92px;top:14px;width:5px;height:63px;background:#c8ccca;"></div><div class="a" style="left:128px;top:14px;width:4px;height:63px;background:#b8bcba;"></div><div class="a" style="left:160px;top:14px;width:6px;height:63px;background:#c0c4c2;"></div><div class="a" style="left:94px;top:77px;width:72px;height:16px;background:#e8e8e8;"></div><div class="a" style="left:48px;top:18px;width:45px;height:50px;background:#9a9896;border-radius:45% 45% 40% 40%"></div><div class="a" style="left:51px;top:32px;width:41px;height:45px;background:#b8a098;border-radius:40%"></div><div class="a" style="left:44px;top:52px;width:47px;height:4px;background:#1a1414;"></div><div class="a" style="left:44px;top:52px;width:4px;height:12px;background:#1a1414;"></div><div class="a" style="left:87px;top:52px;width:4px;height:12px;background:#1a1414;"></div><div class="a" style="left:44px;top:62px;width:47px;height:3px;background:#1a1414;"></div><div class="a" style="left:66px;top:52px;width:4px;height:12px;background:#1a1414;"></div><div class="a" style="left:88px;top:75px;width:42px;height:18px;background:#ececea;border-radius:8px 8px 0 0"></div></div></div><div class="lbl" style="padding-left:23px"><svg class="a" style="left:3px;top:4px" width="15" height="14" viewBox="0 0 15 14"><path d="M7.5 0.8a2.4 2.4 0 0 1 2.4 2.4V7q0 1.4 1.2 2.3V13H3.9V9.3Q5.1 8.4 5.1 7V3.2A2.4 2.4 0 0 1 7.5 0.8z" fill="#dc4a48"/><path d="M1 13.5L13.8 0.5" stroke="#dc4a48" stroke-width="1.8"/><path d="M1.2 13.3L13.6 0.7" stroke="#f4b0a8" stroke-width="0.6"/></svg>Gustavo</div></div>
<div class="tile" style="left:1191px;top:240px;width:166px"><div class="a" style="left:0px;top:0px;width:166px;height:93px;overflow:hidden"><div class="a" style="left:0;top:0;width:166px;height:93px;filter:blur(1.2px)"><div class="a" style="left:0px;top:0px;width:166px;height:93px;background:#dcd8d0;"></div><div class="a" style="left:0px;top:0px;width:32px;height:93px;background:#6c645c;"></div><div class="a" style="left:0px;top:0px;width:5px;height:93px;background:#3a3a3a;"></div><div class="a" style="left:15px;top:0px;width:10px;height:93px;background:#7e766e;"></div><div class="a" style="left:67px;top:0px;width:90px;height:51px;background:#e4e2da;"></div><div class="a" style="left:69px;top:4px;width:10px;height:28px;background:#5aa03c;"></div><div class="a" style="left:69px;top:28px;width:10px;height:15px;background:#3a9ab0;"></div><div class="a" style="left:67px;top:40px;width:14px;height:10px;background:#d8c030;"></div><div class="a" style="left:100px;top:0px;width:55px;height:20px;background:#3aa0b4;"></div><div class="a" style="left:132px;top:0px;width:22px;height:17px;background:#d4643a;"></div><div class="a" style="left:111px;top:21px;width:31px;height:20px;background:#dcc034;"></div><div class="a" style="left:140px;top:20px;width:15px;height:22px;background:#3a9ab0;"></div><div class="a" style="left:115px;top:38px;width:23px;height:12px;background:#5c3e86;"></div><div class="a" style="left:138px;top:38px;width:17px;height:12px;background:#d8c030;"></div><div class="a" style="left:152px;top:38px;width:5px;height:12px;background:#6a3a2a;"></div><div class="a" style="left:82px;top:0px;width:18px;height:15px;background:#f0f0ec;border-radius:0 0 50% 50%"></div><div class="a" style="left:49px;top:48px;width:9px;height:45px;background:#2a7a9a;"></div><div class="a" style="left:50px;top:46px;width:7px;height:6px;background:#f0f0e8;border-radius:50%"></div><div class="a" style="left:67px;top:58px;width:8px;height:35px;background:#2a7a9a;"></div><div class="a" style="left:73px;top:15px;width:40px;height:25px;background:#a89e90;border-radius:45%"></div><div class="a" style="left:77px;top:25px;width:31px;height:46px;background:#c49080;border-radius:40%"></div><div class="a" style="left:76px;top:37px;width:33px;height:10px;background:rgba(220,210,220,.55);border-radius:3px"></div><div class="a" style="left:51px;top:61px;width:87px;height:32px;background:repeating-linear-gradient(110deg,#2a7a3a 0,#2a7a3a 5px,#ece4dc 5px,#ece4dc 8px,#b03828 8px,#b03828 12px,#302828 12px,#302828 15px);border-radius:20px 20px 0 0"></div><div class="a" style="left:80px;top:62px;width:35px;height:24px;background:#c08a78;border-radius:40%"></div></div></div><div class="lbl" style="padding-left:23px"><svg class="a" style="left:3px;top:4px" width="15" height="14" viewBox="0 0 15 14"><path d="M7.5 0.8a2.4 2.4 0 0 1 2.4 2.4V7q0 1.4 1.2 2.3V13H3.9V9.3Q5.1 8.4 5.1 7V3.2A2.4 2.4 0 0 1 7.5 0.8z" fill="#dc4a48"/><path d="M1 13.5L13.8 0.5" stroke="#dc4a48" stroke-width="1.8"/><path d="M1.2 13.3L13.6 0.7" stroke="#f4b0a8" stroke-width="0.6"/></svg>celia</div></div>
<div class="tile" style="left:1363px;top:240px;width:167px"><div class="a" style="left:0px;top:0px;width:167px;height:93px;overflow:hidden"><div class="a" style="left:0;top:0;width:167px;height:93px;filter:blur(1.3px)"><div class="a" style="left:0px;top:0px;width:167px;height:93px;background:#f0f0ee;"></div><div class="a" style="left:0px;top:0px;width:26px;height:93px;background:#f8f8f6;"></div><div class="a" style="left:0px;top:0px;width:1px;height:93px;background:#888;"></div><div class="a" style="left:28px;top:30px;width:9px;height:63px;background:#b4b6b4;"></div><div class="a" style="left:37px;top:35px;width:12px;height:45px;background:#c8ccd0;"></div><div class="a" style="left:65px;top:35px;width:12px;height:25px;background:#d8dce0;"></div><div class="a" style="left:128px;top:21px;width:39px;height:47px;background:#e8e4d8;"></div><div class="a" style="left:77px;top:4px;width:53px;height:30px;background:#2a2420;border-radius:45% 45% 20% 20%"></div><div class="a" style="left:79px;top:16px;width:51px;height:54px;background:#c8a090;border-radius:40%"></div><div class="a" style="left:80px;top:39px;width:22px;height:17px;background:rgba(0,0,0,0);border:2.2px solid #3a2e2a;border-radius:4px"></div><div class="a" style="left:104px;top:39px;width:24px;height:17px;background:rgba(0,0,0,0);border:2.2px solid #3a2e2a;border-radius:4px"></div><div class="a" style="left:44px;top:63px;width:123px;height:30px;background:#1e1e20;border-radius:25px 25px 0 0"></div><div class="a" style="left:110px;top:70px;width:18px;height:23px;background:#ececec;"></div><div class="a" style="left:88px;top:60px;width:32px;height:18px;background:#c09888;border-radius:0 0 40% 40%"></div></div></div><div class="lbl" style="padding-left:23px"><svg class="a" style="left:3px;top:4px" width="15" height="14" viewBox="0 0 15 14"><path d="M7.5 0.8a2.4 2.4 0 0 1 2.4 2.4V7q0 1.4 1.2 2.3V13H3.9V9.3Q5.1 8.4 5.1 7V3.2A2.4 2.4 0 0 1 7.5 0.8z" fill="#dc4a48"/><path d="M1 13.5L13.8 0.5" stroke="#dc4a48" stroke-width="1.8"/><path d="M1.2 13.3L13.6 0.7" stroke="#f4b0a8" stroke-width="0.6"/></svg>Roberto Diniz</div></div>
<div class="tile" style="left:845px;top:340px;width:167px"><div class="a" style="left:48px;top:0px;width:70px;height:93px;overflow:hidden"><div class="a" style="left:0;top:0;width:70px;height:93px;filter:blur(1.0px)"><div class="a" style="left:0px;top:0px;width:70px;height:93px;background:#8a5c50;"></div><div class="a" style="left:0px;top:0px;width:70px;height:50px;background:linear-gradient(160deg,#e8e8e2 0,#f0f0ec 30%,#dcdad4 60%,#c8c0b4 100%);"></div><div class="a" style="left:14px;top:6px;width:30px;height:20px;background:#ffffff;border-radius:50%"></div><div class="a" style="left:0px;top:22px;width:20px;height:51px;background:#c65c24;"></div><div class="a" style="left:0px;top:73px;width:20px;height:20px;background:#3a2e2a;"></div><div class="a" style="left:20px;top:45px;width:50px;height:48px;background:repeating-linear-gradient(160deg,#9a6a5c 0,#9a6a5c 3px,#70483c 3px,#70483c 5px);"></div><div class="a" style="left:20px;top:30px;width:50px;height:28px;background:linear-gradient(164deg,rgba(0,0,0,0) 55%,#8a5c50 55%);"></div><div class="a" style="left:24px;top:47px;width:34px;height:46px;background:#4e4038;border-radius:16px 16px 0 0"></div><div class="a" style="left:29px;top:52px;width:18px;height:26px;background:#c29488;border-radius:40%"></div><div class="a" style="left:52px;top:78px;width:18px;height:15px;background:#e4ccd4;border-radius:6px 6px 0 0"></div></div></div><div class="lbl" style="padding-left:4px">Valéria Leimig</div></div>
<div class="tile" style="left:1018px;top:340px;width:166px"><div class="big">Renata Aguilar</div><div class="lbl" style="padding-left:23px"><svg class="a" style="left:3px;top:4px" width="15" height="14" viewBox="0 0 15 14"><path d="M7.5 0.8a2.4 2.4 0 0 1 2.4 2.4V7q0 1.4 1.2 2.3V13H3.9V9.3Q5.1 8.4 5.1 7V3.2A2.4 2.4 0 0 1 7.5 0.8z" fill="#dc4a48"/><path d="M1 13.5L13.8 0.5" stroke="#dc4a48" stroke-width="1.8"/><path d="M1.2 13.3L13.6 0.7" stroke="#f4b0a8" stroke-width="0.6"/></svg>Renata Aguilar</div></div>
<div class="tile" style="left:1191px;top:340px;width:166px"><div class="big">Izabel Rocha</div><div class="lbl" style="padding-left:4px">Izabel Rocha</div></div>
<div class="tile" style="left:1363px;top:340px;width:167px"><div class="big">Fabrício</div><div class="lbl" style="padding-left:23px"><svg class="a" style="left:3px;top:4px" width="15" height="14" viewBox="0 0 15 14"><path d="M7.5 0.8a2.4 2.4 0 0 1 2.4 2.4V7q0 1.4 1.2 2.3V13H3.9V9.3Q5.1 8.4 5.1 7V3.2A2.4 2.4 0 0 1 7.5 0.8z" fill="#dc4a48"/><path d="M1 13.5L13.8 0.5" stroke="#dc4a48" stroke-width="1.8"/><path d="M1.2 13.3L13.6 0.7" stroke="#f4b0a8" stroke-width="0.6"/></svg>Fabrício</div></div>
<div class="tile" style="left:845px;top:440px;width:167px"><div class="big">iPhone</div><div class="lbl" style="padding-left:23px"><svg class="a" style="left:3px;top:4px" width="15" height="14" viewBox="0 0 15 14"><path d="M7.5 0.8a2.4 2.4 0 0 1 2.4 2.4V7q0 1.4 1.2 2.3V13H3.9V9.3Q5.1 8.4 5.1 7V3.2A2.4 2.4 0 0 1 7.5 0.8z" fill="#dc4a48"/><path d="M1 13.5L13.8 0.5" stroke="#dc4a48" stroke-width="1.8"/><path d="M1.2 13.3L13.6 0.7" stroke="#f4b0a8" stroke-width="0.6"/></svg>iPhone</div></div>
<div class="tile" style="left:1018px;top:440px;width:166px"><div class="big">Veronica Cruz</div><div class="lbl" style="padding-left:23px"><svg class="a" style="left:3px;top:4px" width="15" height="14" viewBox="0 0 15 14"><path d="M7.5 0.8a2.4 2.4 0 0 1 2.4 2.4V7q0 1.4 1.2 2.3V13H3.9V9.3Q5.1 8.4 5.1 7V3.2A2.4 2.4 0 0 1 7.5 0.8z" fill="#dc4a48"/><path d="M1 13.5L13.8 0.5" stroke="#dc4a48" stroke-width="1.8"/><path d="M1.2 13.3L13.6 0.7" stroke="#f4b0a8" stroke-width="0.6"/></svg>Veronica Cruz</div></div>
<div class="tile" style="left:1191px;top:440px;width:166px"><div class="big">Tania</div><div class="lbl" style="padding-left:23px"><svg class="a" style="left:3px;top:4px" width="15" height="14" viewBox="0 0 15 14"><path d="M7.5 0.8a2.4 2.4 0 0 1 2.4 2.4V7q0 1.4 1.2 2.3V13H3.9V9.3Q5.1 8.4 5.1 7V3.2A2.4 2.4 0 0 1 7.5 0.8z" fill="#dc4a48"/><path d="M1 13.5L13.8 0.5" stroke="#dc4a48" stroke-width="1.8"/><path d="M1.2 13.3L13.6 0.7" stroke="#f4b0a8" stroke-width="0.6"/></svg>Tania</div></div>
<div class="tile" style="left:1363px;top:440px;width:167px"><div class="big">MARIA INEZ</div><div class="lbl" style="padding-left:23px"><svg class="a" style="left:3px;top:4px" width="15" height="14" viewBox="0 0 15 14"><path d="M7.5 0.8a2.4 2.4 0 0 1 2.4 2.4V7q0 1.4 1.2 2.3V13H3.9V9.3Q5.1 8.4 5.1 7V3.2A2.4 2.4 0 0 1 7.5 0.8z" fill="#dc4a48"/><path d="M1 13.5L13.8 0.5" stroke="#dc4a48" stroke-width="1.8"/><path d="M1.2 13.3L13.6 0.7" stroke="#f4b0a8" stroke-width="0.6"/></svg>MARIA INEZ</div></div>
<div class="tile" style="left:845px;top:540px;width:167px"><div class="a" style="left:42px;top:5px;width:83px;height:85px;overflow:hidden"><div class="a" style="left:0;top:0;width:83px;height:85px;filter:blur(0.9px)"><div class="a" style="left:0px;top:0px;width:83px;height:85px;background:#c4c4c4;"></div><div class="a" style="left:0px;top:0px;width:30px;height:48px;background:#b8bcbc;"></div><div class="a" style="left:0px;top:15px;width:8px;height:28px;background:#6c6c6a;"></div><div class="a" style="left:36px;top:0px;width:47px;height:11px;background:#c48a48;"></div><div class="a" style="left:38px;top:11px;width:45px;height:7px;background:#282a2c;"></div><div class="a" style="left:60px;top:18px;width:23px;height:30px;background:#dadcde;"></div><div class="a" style="left:0px;top:44px;width:22px;height:22px;background:#1e1e1e;"></div><div class="a" style="left:2px;top:47px;width:18px;height:3px;background:#e8e8e8;"></div><div class="a" style="left:2px;top:52px;width:18px;height:3px;background:#e8e8e8;"></div><div class="a" style="left:0px;top:62px;width:22px;height:23px;background:#2a2420;"></div><div class="a" style="left:18px;top:55px;width:8px;height:12px;background:#c06a30;"></div><div class="a" style="left:20px;top:15px;width:55px;height:70px;background:#1e1816;border-radius:26px 26px 8px 8px"></div><div class="a" style="left:27px;top:20px;width:34px;height:38px;background:#bc8676;border-radius:40%"></div><div class="a" style="left:37px;top:42px;width:14px;height:4px;background:#e8d4cc;border-radius:40%"></div><div class="a" style="left:68px;top:48px;width:15px;height:37px;background:#c8b8a0;"></div><div class="a" style="left:36px;top:60px;width:25px;height:25px;background:#8a6a5a;"></div></div></div><div class="lbl" style="padding-left:23px"><svg class="a" style="left:3px;top:4px" width="15" height="14" viewBox="0 0 15 14"><path d="M7.5 0.8a2.4 2.4 0 0 1 2.4 2.4V7q0 1.4 1.2 2.3V13H3.9V9.3Q5.1 8.4 5.1 7V3.2A2.4 2.4 0 0 1 7.5 0.8z" fill="#dc4a48"/><path d="M1 13.5L13.8 0.5" stroke="#dc4a48" stroke-width="1.8"/><path d="M1.2 13.3L13.6 0.7" stroke="#f4b0a8" stroke-width="0.6"/></svg>Priscila Teodoro</div></div>
<div class="tile" style="left:1018px;top:540px;width:166px"><div class="big">Lucas</div><div class="lbl" style="padding-left:23px"><svg class="a" style="left:3px;top:4px" width="15" height="14" viewBox="0 0 15 14"><path d="M7.5 0.8a2.4 2.4 0 0 1 2.4 2.4V7q0 1.4 1.2 2.3V13H3.9V9.3Q5.1 8.4 5.1 7V3.2A2.4 2.4 0 0 1 7.5 0.8z" fill="#dc4a48"/><path d="M1 13.5L13.8 0.5" stroke="#dc4a48" stroke-width="1.8"/><path d="M1.2 13.3L13.6 0.7" stroke="#f4b0a8" stroke-width="0.6"/></svg>Lucas</div></div>
<div class="tile" style="left:1191px;top:540px;width:166px"><div class="big">Aldeny</div><div class="lbl" style="padding-left:23px"><svg class="a" style="left:3px;top:4px" width="15" height="14" viewBox="0 0 15 14"><path d="M7.5 0.8a2.4 2.4 0 0 1 2.4 2.4V7q0 1.4 1.2 2.3V13H3.9V9.3Q5.1 8.4 5.1 7V3.2A2.4 2.4 0 0 1 7.5 0.8z" fill="#dc4a48"/><path d="M1 13.5L13.8 0.5" stroke="#dc4a48" stroke-width="1.8"/><path d="M1.2 13.3L13.6 0.7" stroke="#f4b0a8" stroke-width="0.6"/></svg>Aldeny</div></div>
<div class="tile" style="left:1363px;top:540px;width:167px"><div class="big">Dr.Ângelo Fróes</div><div class="lbl" style="padding-left:23px"><svg class="a" style="left:3px;top:4px" width="15" height="14" viewBox="0 0 15 14"><path d="M7.5 0.8a2.4 2.4 0 0 1 2.4 2.4V7q0 1.4 1.2 2.3V13H3.9V9.3Q5.1 8.4 5.1 7V3.2A2.4 2.4 0 0 1 7.5 0.8z" fill="#dc4a48"/><path d="M1 13.5L13.8 0.5" stroke="#dc4a48" stroke-width="1.8"/><path d="M1.2 13.3L13.6 0.7" stroke="#f4b0a8" stroke-width="0.6"/></svg>Dr.Ângelo Fróes</div></div>
<div class="tile" style="left:1018px;top:640px;width:166px"><div class="big">Rita de Cássia</div><div class="lbl" style="padding-left:4px">Rita de Cássia</div></div>
<div class="tile" style="left:1191px;top:640px;width:166px"><div class="a" style="left:41px;top:5px;width:84px;height:84px;background:#7b52c4"></div><div class="a" style="left:41px;top:22px;width:84px;text-align:center;font-size:44px;color:#fff">M</div><div class="lbl" style="padding-left:4px">Monique Leite</div></div>
<div class="a" style="left:826px;top:423px;width:1.3px;height:27px;background:#8a8a8a"></div><div class="a" style="left:829.5px;top:423px;width:1.3px;height:27px;background:#8a8a8a"></div>
<div class="a" style="left:0;top:780px;width:1600px;height:70px;background:#1a1a1a"></div>
<svg class="a" style="left:40px;top:801px" width="16" height="23" viewBox="0 0 16 23"><rect x="4" y="0.5" width="8" height="14" rx="4" fill="#c0c0c0"/><path d="M1 10a7 7 0 0 0 14 0" stroke="#c0c0c0" stroke-width="1.6" fill="none"/><path d="M8 17v4.5M4 22h8" stroke="#c0c0c0" stroke-width="1.6"/></svg>
<svg class="a" style="left:76px;top:810px" width="10" height="7" viewBox="0 0 10 7"><path d="M1.5 5.5L5 2l3.5 3.5" stroke="#c8c8c8" stroke-width="1.6" fill="none"/></svg>
<div class="a" style="left:-12px;width:120px;top:830.7px;text-align:center;font-size:12.8px;color:#d4d4d4;white-space:nowrap">Mute</div>
<svg class="a" style="left:132px;top:805px" width="27" height="16" viewBox="0 0 27 16"><rect x="0" y="0.5" width="18" height="15" rx="3.5" fill="#c0c0c0"/><path d="M19 5.5l7-4.5v14l-7-4.5z" fill="#c0c0c0"/></svg>
<svg class="a" style="left:179px;top:810px" width="10" height="7" viewBox="0 0 10 7"><path d="M1.5 5.5L5 2l3.5 3.5" stroke="#c8c8c8" stroke-width="1.6" fill="none"/></svg>
<div class="a" style="left:85px;width:120px;top:830.7px;text-align:center;font-size:12.8px;color:#d4d4d4;white-space:nowrap">Stop Video</div>
<svg class="a" style="left:528px;top:803px" width="27" height="21" viewBox="0 0 27 21"><circle cx="8" cy="5" r="4.6" fill="#c0c0c0"/><path d="M0.5 19v-2.5q0-5 7.5-5t7.5 5V19z" fill="#c0c0c0"/><circle cx="20" cy="7" r="3.8" fill="#c0c0c0"/><path d="M16.5 19.5v-2.5q0-3.5-1.5-4.5q1.5-.8 5-.8 6.5 0 6.5 4.5v3.3z" fill="#c0c0c0"/></svg>
<div class="a" style="left:559px;top:804px;font-size:11.7px;color:#d0d0d0">22</div>
<svg class="a" style="left:592px;top:810px" width="10" height="7" viewBox="0 0 10 7"><path d="M1.5 5.5L5 2l3.5 3.5" stroke="#c8c8c8" stroke-width="1.6" fill="none"/></svg>
<div class="a" style="left:481.5px;width:120px;top:830.7px;text-align:center;font-size:12.8px;color:#d4d4d4;white-space:nowrap">Participants</div>
<svg class="a" style="left:645px;top:803px" width="23" height="21" viewBox="0 0 23 21"><path d="M4 0.5h15a3.5 3.5 0 0 1 3.5 3.5v9a3.5 3.5 0 0 1-3.5 3.5H10l-4.5 4v-4H4A3.5 3.5 0 0 1 .5 13V4A3.5 3.5 0 0 1 4 .5z" fill="#c0c0c0"/></svg>
<svg class="a" style="left:687px;top:810px" width="10" height="7" viewBox="0 0 10 7"><path d="M1.5 5.5L5 2l3.5 3.5" stroke="#c8c8c8" stroke-width="1.6" fill="none"/></svg>
<div class="a" style="left:597px;width:120px;top:830.7px;text-align:center;font-size:12.8px;color:#d4d4d4;white-space:nowrap">Chat</div>
<svg class="a" style="left:742px;top:803px" width="26" height="20" viewBox="0 0 26 20"><rect x="0" y="0" width="26" height="20" rx="4" fill="#1fcb55"/><path d="M13 15.5V5M8.5 9.5L13 5l4.5 4.5" stroke="#111" stroke-width="2" fill="none"/></svg>
<div class="a" style="left:695px;width:120px;top:830.7px;text-align:center;font-size:12.8px;color:#3fd46a;white-space:nowrap">Share Screen</div>
<svg class="a" style="left:837px;top:803px" width="22" height="22" viewBox="0 0 22 22"><circle cx="11" cy="11" r="9.8" stroke="#c0c0c0" stroke-width="1.5" fill="none"/><circle cx="11" cy="11" r="7.3" fill="#c0c0c0"/></svg>
<div class="a" style="left:788px;width:120px;top:830.7px;text-align:center;font-size:12.8px;color:#d4d4d4;white-space:nowrap">Record</div>
<svg class="a" style="left:921px;top:801px" width="24" height="22" viewBox="0 0 24 22"><circle cx="10" cy="12" r="9.5" fill="#c0c0c0"/><circle cx="7" cy="10" r="1.3" fill="#1a1a1a"/><circle cx="13" cy="10" r="1.3" fill="#1a1a1a"/><path d="M6 14q4 3.5 8 0" stroke="#1a1a1a" stroke-width="1.4" fill="none"/><path d="M19.5 0.5v8M15.5 4.5h8" stroke="#1a1a1a" stroke-width="3.2"/><path d="M19.5 0.8v7.4M15.8 4.5h7.4" stroke="#c0c0c0" stroke-width="1.6"/></svg>
<svg class="a" style="left:955px;top:810px" width="10" height="7" viewBox="0 0 10 7"><path d="M1.5 5.5L5 2l3.5 3.5" stroke="#c8c8c8" stroke-width="1.6" fill="none"/></svg>
<div class="a" style="left:871px;width:120px;top:830.7px;text-align:center;font-size:12.8px;color:#d4d4d4;white-space:nowrap">Reactions</div>
<svg class="a" style="left:1006px;top:806px" width="18" height="17" viewBox="0 0 18 17"><path d="M1 6.5V4a3 3 0 0 1 3-3h4.5M17 10.5V13a3 3 0 0 1-3 3H9.5" stroke="#c0c0c0" stroke-width="1.6" fill="none"/><circle cx="14" cy="4" r="2.6" stroke="#c0c0c0" stroke-width="1.6" fill="none"/><circle cx="4" cy="13" r="2.6" stroke="#c0c0c0" stroke-width="1.6" fill="none"/></svg>
<div class="a" style="left:955px;width:120px;top:830.7px;text-align:center;font-size:12.8px;color:#d4d4d4;white-space:nowrap">Apps</div>
<svg class="a" style="left:1096px;top:803px" width="23" height="18" viewBox="0 0 23 18"><path d="M5.5 16H3.5a2.5 2.5 0 0 1-2.5-2.5v-10A2.5 2.5 0 0 1 3.5 1h15A2.5 2.5 0 0 1 21 3.5v10a2.5 2.5 0 0 1-2.5 2.5" stroke="#c0c0c0" stroke-width="1.6" fill="none"/><rect x="9" y="13" width="12" height="4.5" rx="2.2" fill="#c0c0c0"/></svg>
<div class="a" style="left:1048px;width:120px;top:830.7px;text-align:center;font-size:12.8px;color:#d4d4d4;white-space:nowrap">Whiteboards</div>
<div class="a" style="left:1465px;top:808px;width:64px;height:29px;border-radius:6px;background:#c9272c"></div>
<div class="a" style="left:1465px;top:815px;width:64px;text-align:center;font-size:11.8px;font-weight:bold;color:#fff">Leave</div>
<div class="a" style="left:1569.5px;top:814.2px;width:3.6px;height:3.6px;border-radius:50%;background:#e8e8e8"></div>
<div class="a" style="left:1569.5px;top:820.2px;width:3.6px;height:3.6px;border-radius:50%;background:#e8e8e8"></div>
<div class="a" style="left:1569.5px;top:826.2px;width:3.6px;height:3.6px;border-radius:50%;background:#e8e8e8"></div>
<div class="a" style="left:0;top:850px;width:1600px;height:50px;background:#2d2517;border-top:1px solid #57534b"></div>
<svg class="a" style="left:582px;top:863px" width="24" height="24" viewBox="0 0 24 24"><defs><linearGradient id="wg" x1="0" y1="0" x2="1" y2="1"><stop offset="0" stop-color="#7ce0ff"/><stop offset="1" stop-color="#1a9ee8"/></linearGradient></defs><rect x="0" y="0" width="11.3" height="11.3" rx="1" fill="url(#wg)"/><rect x="12.7" y="0" width="11.3" height="11.3" rx="1" fill="url(#wg)"/><rect x="0" y="12.7" width="11.3" height="11.3" rx="1" fill="url(#wg)"/><rect x="12.7" y="12.7" width="11.3" height="11.3" rx="1" fill="url(#wg)"/></svg>
<svg class="a" style="left:628px;top:863px" width="26" height="24" viewBox="0 0 26 24"><rect x="0" y="7" width="16" height="16" rx="2" fill="#5f5f5f"/><rect x="5" y="4" width="16" height="14" rx="2" fill="#9a9a9a"/><rect x="9" y="1" width="16" height="14" rx="2" fill="#e6e6e6"/></svg>
<svg class="a" style="left:673px;top:863px" width="26" height="24" viewBox="0 0 26 24"><path d="M1 3a2 2 0 0 1 2-2h7l3 3h10a2 2 0 0 1 2 2v15a2 2 0 0 1-2 2H3a2 2 0 0 1-2-2z" fill="#e8b028"/><rect x="1" y="7" width="24" height="16" rx="1.5" fill="#ffd24c"/><rect x="8" y="16" width="10" height="5" rx="1" fill="#1f7ad0"/></svg>
<svg class="a" style="left:719px;top:863px" width="25" height="25" viewBox="0 0 25 25"><rect x="0" y="0" width="25" height="25" rx="3" fill="#3c5cc0"/><rect x="2.5" y="2.5" width="20" height="20" rx="1" fill="#e8eaf0"/><path d="M3 3l9.5 10L22 3v19l-9.5-9L3 22z" fill="#3c5cc0"/><path d="M12.5 13L22 22H3z" fill="#6a7890"/></svg>
<svg class="a" style="left:765px;top:863px" width="25" height="25" viewBox="0 0 25 25"><rect x="9" y="3" width="16" height="20" rx="2" fill="#28a8ea"/><rect x="9" y="13" width="16" height="10" fill="#0a64b0"/><rect x="0" y="6" width="14" height="14" rx="2" fill="#0f6cbd"/><circle cx="7" cy="13" r="3.6" stroke="#fff" stroke-width="1.8" fill="none"/></svg>
<svg class="a" style="left:811px;top:863px" width="26" height="25" viewBox="0 0 26 25"><rect x="0" y="0" width="26" height="25" rx="4" fill="#f0404e"/><g fill="#fff"><circle cx="13" cy="3.5" r="1"/><circle cx="13" cy="21.5" r="1"/><circle cx="4" cy="12.5" r="1"/><circle cx="22" cy="12.5" r="1"/><circle cx="7" cy="6" r=".9"/><circle cx="19" cy="6" r=".9"/><circle cx="7" cy="19" r=".9"/><circle cx="19" cy="19" r=".9"/></g><path d="M9 12.5l3 3 5.5-6" stroke="#fff" stroke-width="2" fill="none"/></svg>
<svg class="a" style="left:858px;top:863px" width="23" height="23" viewBox="0 0 23 23"><defs><linearGradient id="pg" x1="0" y1="0" x2="0" y2="1"><stop offset="0" stop-color="#5cc0f4"/><stop offset="1" stop-color="#1a70c8"/></linearGradient></defs><rect x="0" y="0" width="23" height="23" rx="4" fill="url(#pg)"/><path d="M0 19l8-9 6 6 4-3 5 5v1a4 4 0 0 1-4 4H4a4 4 0 0 1-4-4z" fill="#1e5aa8"/><path d="M0 21l8-8 15 10H4z" fill="#8ad4f8"/><circle cx="17" cy="6" r="2.8" fill="#fff"/></svg>
<svg class="a" style="left:902px;top:863px" width="26" height="25" viewBox="0 0 26 25"><rect x="0" y="0" width="26" height="25" rx="3" fill="#e0401e"/><path d="M8 21q-3-1 1-4 4-3 6-9 1-4-1-4-2 0-1 4 2 6 6 8 5 1 4 3-1 1-4-1-4-2-9 0-5 3-2 3z" stroke="#fff" stroke-width="1.5" fill="#fff" fill-opacity="0.85"/></svg>
<svg class="a" style="left:948px;top:863px" width="26" height="26" viewBox="0 0 26 26"><circle cx="13" cy="13" r="12.5" fill="#db4437"/><path d="M13 13L2.2 6.8A12.5 12.5 0 0 0 6.7 23.8z" fill="#0f9d58"/><path d="M13 13l-6.3 10.8A12.5 12.5 0 0 0 25.5 13z" fill="#0f9d58"/><path d="M13 13h12.5A12.5 12.5 0 0 1 6.7 23.8z" fill="#f4c20d"/><circle cx="13" cy="13" r="5.6" fill="#fff"/><circle cx="13" cy="13" r="4.4" fill="#4285f4"/></svg>
<div class="a" style="left:986px;top:855px;width:42px;height:43px;border-radius:5px;background:#3d342a"></div>
<svg class="a" style="left:993px;top:863px" width="26" height="26" viewBox="0 0 26 26"><defs><radialGradient id="zg" cx=".4" cy=".3" r=".8"><stop offset="0" stop-color="#4b8dff"/><stop offset="1" stop-color="#0b4fd8"/></radialGradient></defs><circle cx="13" cy="13" r="12.8" fill="url(#zg)"/><text x="13" y="15.5" font-size="6.5" font-family="Liberation Sans" font-weight="bold" fill="#fff" text-anchor="middle">zoom</text></svg>
<div class="a" style="left:999px;top:892px;width:15px;height:3px;border-radius:2px;background:#5ac8ff"></div>
<div class="a" style="left:683px;top:892px;width:6px;height:3px;border-radius:2px;background:#9a9590"></div>
<div class="a" style="left:729px;top:892px;width:6px;height:3px;border-radius:2px;background:#9a9590"></div>
<div class="a" style="left:775px;top:892px;width:6px;height:3px;border-radius:2px;background:#9a9590"></div>
<div class="a" style="left:820px;top:892px;width:6px;height:3px;border-radius:2px;background:#9a9590"></div>
<div class="a" style="left:866px;top:892px;width:6px;height:3px;border-radius:2px;background:#9a9590"></div>
<div class="a" style="left:911px;top:892px;width:6px;height:3px;border-radius:2px;background:#9a9590"></div>
<div class="a" style="left:957px;top:892px;width:6px;height:3px;border-radius:2px;background:#9a9590"></div>
<svg class="a" style="left:1276px;top:870px" width="13" height="9" viewBox="0 0 13 9"><path d="M1 8l5.5-6.5L12 8" stroke="#e0e0e0" stroke-width="1.2" fill="none"/></svg>
<svg class="a" style="left:1299px;top:868px" width="19" height="16" viewBox="0 0 19 16"><ellipse cx="7" cy="7" rx="6.5" ry="4.5" fill="#e8e8e8"/><ellipse cx="10" cy="5" rx="4" ry="4" fill="#f4f4f4"/><circle cx="13" cy="11" r="4.3" fill="#e23b3b"/><path d="M11.2 9.2l3.6 3.6M14.8 9.2l-3.6 3.6" stroke="#fff" stroke-width="1.1"/></svg>
<svg class="a" style="left:1330px;top:865px" width="13" height="18" viewBox="0 0 13 18"><rect x="3.5" y="0.5" width="6" height="10" rx="3" stroke="#6cc8e6" stroke-width="1.4" fill="none"/><path d="M1 8a5.5 5.5 0 0 0 11 0M6.5 13.5V17" stroke="#6cc8e6" stroke-width="1.4" fill="none"/></svg>
<div class="a" style="left:1364px;top:860px;font-size:11.4px;color:#f0f0f0;letter-spacing:0.2px">POR</div>
<div class="a" style="left:1362px;top:875px;font-size:11.4px;color:#f0f0f0">PTB2</div>
<svg class="a" style="left:1407px;top:867px" width="18" height="14" viewBox="0 0 18 14"><path d="M1 5a11.5 11.5 0 0 1 16 0M3.5 7.8a8 8 0 0 1 11 0M6 10.5a4.3 4.3 0 0 1 6 0" stroke="#f0f0f0" stroke-width="1.4" fill="none"/><circle cx="9" cy="12.5" r="1.3" fill="#f0f0f0"/></svg>
<svg class="a" style="left:1432px;top:867px" width="18" height="15" viewBox="0 0 18 15"><path d="M1 5h3l4-3.5v12L4 10H1z" stroke="#f0f0f0" stroke-width="1.2" fill="none"/><path d="M11 4.5q1.8 3 0 6M13.5 2.5q3 5 0 10" stroke="#f0f0f0" stroke-width="1.2" fill="none"/></svg>
<svg class="a" style="left:1457px;top:867px" width="18" height="14" viewBox="0 0 18 14"><rect x="1" y="3" width="14" height="9" rx="1.5" stroke="#f0f0f0" stroke-width="1.2" fill="none"/><rect x="15.5" y="5.5" width="1.8" height="4" fill="#f0f0f0"/><path d="M3 7l3-4h3l-2 3h3l-4 5" fill="#f0f0f0"/></svg>
<div class="a" style="left:1526px;top:860px;font-size:12px;color:#f0f0f0;letter-spacing:-0.3px">19:40</div>
<div class="a" style="left:1491px;top:875px;font-size:12px;color:#f0f0f0;letter-spacing:0.35px">24/02/2023</div>
<div class="a" style="left:1563px;top:866.5px;width:17px;height:17px;border-radius:50%;background:#4cc2ff"></div>
<div class="a" style="left:1563px;top:868px;width:17px;text-align:center;font-size:11px;color:#1a1a1a">2</div>
<svg class="a" style="left:1554px;top:93px" width="33" height="33" viewBox="0 0 33 33"><rect width="33" height="33" rx="8" fill="#46178f"/><text x="16.5" y="20" font-size="8.3" font-weight="bold" font-family="Liberation Sans" fill="#fff" text-anchor="middle" letter-spacing="-0.5">Kahoot!</text></svg>
<svg class="a" style="left:1549px;top:88px" width="11" height="11" viewBox="0 0 11 11"><circle cx="5.5" cy="5.5" r="5" fill="#fff" stroke="#1a1a1a" stroke-width="0.8"/><path d="M5.5 2.2v6.6M2.2 5.5h6.6" stroke="#111" stroke-width="1.5"/></svg>
<svg class="a" style="left:1554px;top:139px" width="33" height="33" viewBox="0 0 33 33"><rect x="5" y="4" width="24" height="25" fill="#f05a28"/><circle cx="29" cy="16.5" r="5.5" fill="#1a1a1a"/></svg>
<svg class="a" style="left:1549px;top:134px" width="11" height="11" viewBox="0 0 11 11"><circle cx="5.5" cy="5.5" r="5" fill="#fff" stroke="#1a1a1a" stroke-width="0.8"/><path d="M5.5 2.2v6.6M2.2 5.5h6.6" stroke="#111" stroke-width="1.5"/></svg>
<svg class="a" style="left:1554px;top:185px" width="33" height="33" viewBox="0 0 33 33"><defs><linearGradient id="ag3" x1="0" y1="1" x2="1" y2="0"><stop offset="0" stop-color="#1f4fe0"/><stop offset="1" stop-color="#9b3ce6"/></linearGradient></defs><rect width="33" height="33" rx="8" fill="url(#ag3)"/><path d="M7 11l4.5 11 4-8 4 8L24 11" stroke="#fff" stroke-width="3" fill="none" stroke-linejoin="round"/><path d="M27 20l-1.5 5" stroke="#fff" stroke-width="2.2"/></svg>
<svg class="a" style="left:1549px;top:180px" width="11" height="11" viewBox="0 0 11 11"><circle cx="5.5" cy="5.5" r="5" fill="#fff" stroke="#1a1a1a" stroke-width="0.8"/><path d="M5.5 2.2v6.6M2.2 5.5h6.6" stroke="#111" stroke-width="1.5"/></svg>
<svg class="a" style="left:1554px;top:231px" width="33" height="33" viewBox="0 0 33 33"><rect width="33" height="33" rx="8" fill="#5468ec"/><circle cx="16" cy="17" r="9" stroke="#fff" stroke-width="1.8" fill="none"/><path d="M11.5 19q4.5 3.5 9 0" stroke="#fff" stroke-width="1.8" fill="none"/><path d="M5 10V4h6M28 23v6h-6" stroke="#fff" stroke-width="1.6" fill="none"/></svg>
<svg class="a" style="left:1549px;top:226px" width="11" height="11" viewBox="0 0 11 11"><circle cx="5.5" cy="5.5" r="5" fill="#fff" stroke="#1a1a1a" stroke-width="0.8"/><path d="M5.5 2.2v6.6M2.2 5.5h6.6" stroke="#111" stroke-width="1.5"/></svg>
<svg class="a" style="left:1554px;top:277px" width="33" height="33" viewBox="0 0 33 33"><rect width="33" height="33" rx="8" fill="#9a16b8"/><path d="M2 9a7 7 0 0 0 7-7M2 13a11 11 0 0 0 11-11M2 17a15 15 0 0 0 15-15" stroke="#fff" stroke-width="1.6" fill="none" transform="rotate(0)"/><g stroke="#fff" stroke-width="2"><path d="M20.98 2.95L26.97 3.25"/><path d="M20.43 6.63L26.25 8.10"/><path d="M19.17 10.14L24.59 12.71"/><path d="M17.25 13.33L22.07 16.91"/><path d="M14.75 16.09L18.77 20.54"/><path d="M11.75 18.31L14.83 23.45"/><path d="M8.38 19.90L10.40 25.55"/><path d="M4.77 20.80L5.65 26.73"/><path d="M1.05 20.98L0.75 26.97"/></g><rect x="19" y="22" width="7" height="6" fill="#fff"/><path d="M26 23.5l3-2v7.5l-3-2z" fill="#fff"/></svg>
<svg class="a" style="left:1549px;top:272px" width="11" height="11" viewBox="0 0 11 11"><circle cx="5.5" cy="5.5" r="5" fill="#fff" stroke="#1a1a1a" stroke-width="0.8"/><path d="M5.5 2.2v6.6M2.2 5.5h6.6" stroke="#111" stroke-width="1.5"/></svg>
<svg class="a" style="left:1554px;top:323px" width="33" height="33" viewBox="0 0 33 33"><rect width="33" height="33" rx="8" fill="#fafafa"/><text x="16.5" y="20.5" font-size="10.5" font-weight="bold" font-style="italic" font-family="Liberation Sans" fill="#5b7fe0" text-anchor="middle">Sesh</text></svg>
<svg class="a" style="left:1549px;top:318px" width="11" height="11" viewBox="0 0 11 11"><circle cx="5.5" cy="5.5" r="5" fill="#fff" stroke="#1a1a1a" stroke-width="0.8"/><path d="M5.5 2.2v6.6M2.2 5.5h6.6" stroke="#111" stroke-width="1.5"/></svg>
<svg class="a" style="left:1554px;top:369px" width="33" height="33" viewBox="0 0 33 33"><rect width="33" height="33" rx="8" fill="#f6c814"/><path d="M7 10l4 2-4 2M26 10l-4 2 4 2" stroke="#333" stroke-width="1.4" fill="none"/><path d="M9 17q7.5 9 15 0z" fill="#3a2a1a"/><path d="M20 33V22h13v6a5 5 0 0 1-5 5z" fill="#f4f4f4"/><rect x="23" y="24" width="2.5" height="7" fill="#3a58c8"/><rect x="27" y="24" width="2.5" height="7" fill="#3a58c8"/></svg>
<svg class="a" style="left:1549px;top:364px" width="11" height="11" viewBox="0 0 11 11"><circle cx="5.5" cy="5.5" r="5" fill="#fff" stroke="#1a1a1a" stroke-width="0.8"/><path d="M5.5 2.2v6.6M2.2 5.5h6.6" stroke="#111" stroke-width="1.5"/></svg>
<svg class="a" style="left:1554px;top:415px" width="33" height="33" viewBox="0 0 33 33"><rect width="33" height="33" rx="8" fill="#e8e8f0"/><text x="16.5" y="20" font-size="9" font-weight="bold" font-family="Liberation Sans" fill="#5a3ac8" text-anchor="middle" letter-spacing="-0.2">twine</text></svg>
<svg class="a" style="left:1549px;top:410px" width="11" height="11" viewBox="0 0 11 11"><circle cx="5.5" cy="5.5" r="5" fill="#fff" stroke="#1a1a1a" stroke-width="0.8"/><path d="M5.5 2.2v6.6M2.2 5.5h6.6" stroke="#111" stroke-width="1.5"/></svg>
<svg class="a" style="left:1554px;top:461px" width="33" height="33" viewBox="0 0 33 33"><rect width="33" height="33" rx="8" fill="#fafafa"/><rect x="6" y="6" width="9.5" height="9.5" rx="2.5" fill="#8a5a3a"/><rect x="17.5" y="6" width="9.5" height="9.5" rx="2.5" fill="#f05a28"/><rect x="6" y="17.5" width="9.5" height="9.5" rx="2.5" fill="#8ec850"/><rect x="17.5" y="17.5" width="9.5" height="9.5" rx="2.5" fill="#f8a830"/></svg>
<svg class="a" style="left:1549px;top:456px" width="11" height="11" viewBox="0 0 11 11"><circle cx="5.5" cy="5.5" r="5" fill="#fff" stroke="#1a1a1a" stroke-width="0.8"/><path d="M5.5 2.2v6.6M2.2 5.5h6.6" stroke="#111" stroke-width="1.5"/></svg>
<svg class="a" style="left:1554px;top:507px" width="33" height="33" viewBox="0 0 33 33"><rect width="33" height="33" rx="8" fill="#3a5aa8"/><path d="M8 16a8.5 8.5 0 0 1 15-5.5M25 17a8.5 8.5 0 0 1-15 5.5" stroke="#fff" stroke-width="2.2" fill="none"/><path d="M22 7l2 4-4 .5M11 26l-2-4 4-.5" stroke="#fff" stroke-width="2" fill="none"/><path d="M10 16h13" stroke="#6ab0f0" stroke-width="2"/></svg>
<svg class="a" style="left:1549px;top:502px" width="11" height="11" viewBox="0 0 11 11"><circle cx="5.5" cy="5.5" r="5" fill="#fff" stroke="#1a1a1a" stroke-width="0.8"/><path d="M5.5 2.2v6.6M2.2 5.5h6.6" stroke="#111" stroke-width="1.5"/></svg>
<svg class="a" style="left:1554px;top:553px" width="33" height="33" viewBox="0 0 33 33"><rect width="33" height="33" rx="8" fill="#1a6af0"/><path d="M9 9q6-3 14-1v4q-7-1-10 .5v9q3 1.5 10 .5v4q-8 2-14-1z" fill="#fff"/><path d="M12 15h9v3h-9z" fill="#fff"/></svg>
<svg class="a" style="left:1549px;top:548px" width="11" height="11" viewBox="0 0 11 11"><circle cx="5.5" cy="5.5" r="5" fill="#fff" stroke="#1a1a1a" stroke-width="0.8"/><path d="M5.5 2.2v6.6M2.2 5.5h6.6" stroke="#111" stroke-width="1.5"/></svg>
<svg class="a" style="left:1559px;top:603px" width="24" height="22" viewBox="0 0 24 22"><circle cx="12" cy="5.5" r="5" fill="#f06a6a"/><circle cx="5.5" cy="15.5" r="5" fill="#f06a6a"/><circle cx="18.5" cy="15.5" r="5" fill="#f06a6a"/></svg>
<div class="a" style="left:1558px;top:643px;width:25px;height:25px;border-radius:5px;background:#2a2a2c"></div>
<svg class="a" style="left:1563px;top:648px" width="15" height="15" viewBox="0 0 15 15"><path d="M7.5 1v13M1 7.5h13" stroke="#d8d8d8" stroke-width="1.3"/></svg>
</body></html>
